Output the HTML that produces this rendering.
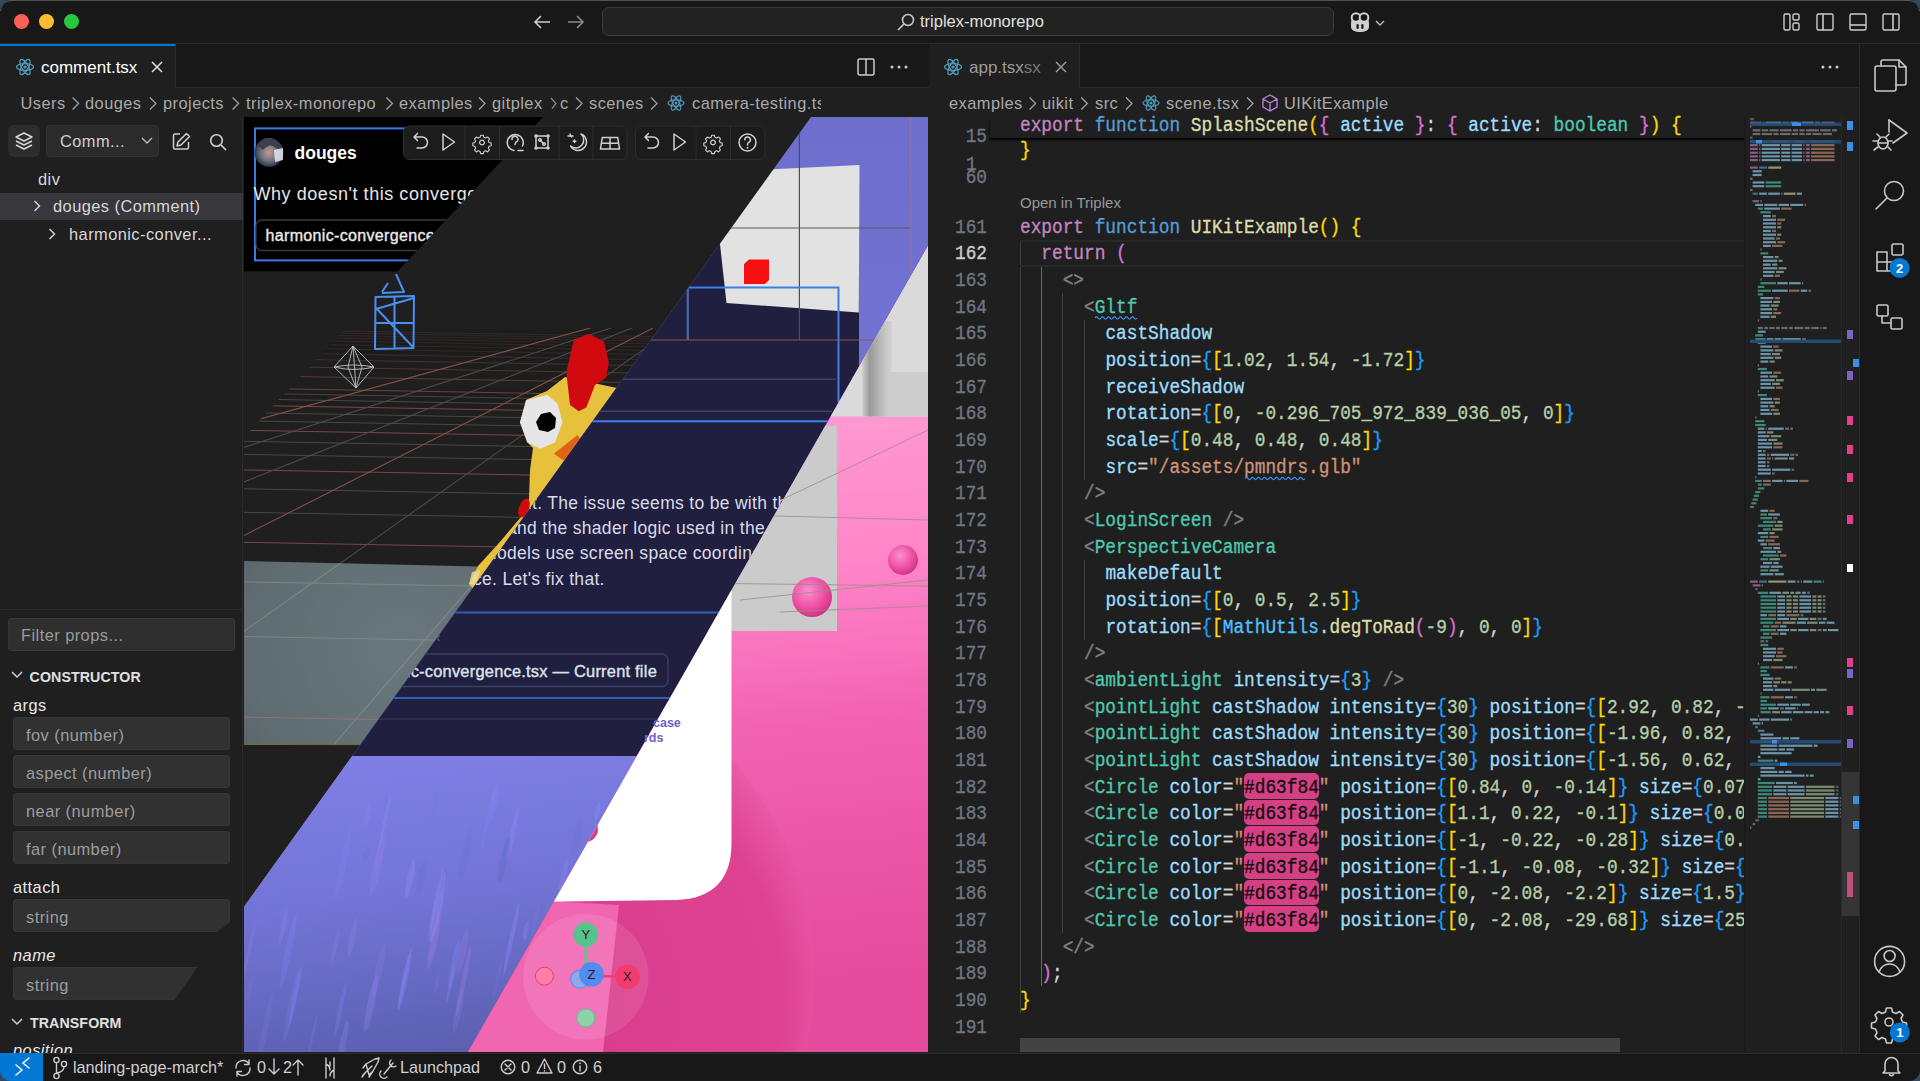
<!DOCTYPE html>
<html><head><meta charset="utf-8">
<style>
*{box-sizing:border-box;margin:0;padding:0}
html,body{width:1920px;height:1081px;overflow:hidden;background:#1f1f1f}
body{position:relative;font-family:"Liberation Sans",sans-serif;color:#ccc}
.a{position:absolute}
.t{position:absolute;white-space:nowrap;line-height:1}
svg{position:absolute;overflow:visible}
#title{left:0;top:0;width:1920px;height:44px;background:#181818;border-bottom:1px solid #2b2b2b}
#tabsL{left:0;top:44px;width:929px;height:44px;background:#181818;border-bottom:1px solid #2b2b2b}
#tabsR{left:929px;top:44px;width:930px;height:44px;background:#181818;border-bottom:1px solid #2b2b2b;border-left:1px solid #2b2b2b}
.tab{position:absolute;top:0;height:44px;background:#1f1f1f;border-right:1px solid #2b2b2b}
.bc{font-size:16.4px;letter-spacing:0.45px;color:#a9a9a9;top:95px}
.ui{font-size:16.4px;letter-spacing:0.45px}
#left{left:0;top:117px;width:243px;height:936px;background:#1f1f1f;border-right:1px solid #2b2b2b}
.inp{position:absolute;left:13px;width:217px;height:33px;background:#313131;border:1px solid #363636;border-radius:3px}
.inp span{position:absolute;left:12px;top:8px;font-size:16.4px;letter-spacing:0.45px;color:#9d9d9d;white-space:nowrap}
.lbl{font-size:16.5px;color:#e0e0e0}
#status{left:0;top:1053px;width:1920px;height:28px;background:#181818;border-top:1px solid #2b2b2b}
#act{left:1859px;top:44px;width:61px;height:1009px;background:#181818;border-left:1px solid #2b2b2b}
.code{position:absolute;left:1020px;font-family:"Liberation Mono",monospace;font-size:17.8px;white-space:pre;color:#d4d4d4;-webkit-text-stroke:0.3px currentColor;line-height:26.67px;height:26.67px;transform:translateY(1.6px) scaleY(1.17)}
.ln{position:absolute;left:930px;width:57px;text-align:right;font-family:"Liberation Mono",monospace;font-size:17.8px;color:#6e7681;-webkit-text-stroke:0.3px currentColor;line-height:26.67px;transform:translateY(1.6px) scaleY(1.17)}
.k{color:#c586c0}.f{color:#569cd6}.fn{color:#dcdcaa}.b1{color:#ffd700}.b2{color:#da70d6}.b3{color:#179fff}
.tg{color:#4ec9b0}.p{color:#808080}.at{color:#9cdcfe}.n{color:#b5cea8}.s{color:#ce9178}.w{color:#d4d4d4}
.hx{color:#111}.mu{color:#4fc1ff}
</style></head><body>

<!-- TITLE BAR -->
<div id="title" class="a"></div>
<div class="a" style="left:14px;top:14px;width:15px;height:15px;border-radius:50%;background:#fe5f57"></div>
<div class="a" style="left:39px;top:14px;width:15px;height:15px;border-radius:50%;background:#febc2e"></div>
<div class="a" style="left:64px;top:14px;width:15px;height:15px;border-radius:50%;background:#28c840"></div>

<!-- TABS -->
<div id="tabsL" class="a"></div>
<div class="tab" style="left:0;top:44px;width:176px;border-top:2px solid #0078d4"></div>
<div class="t" style="left:41px;top:59px;font-size:17px;color:#fff">comment.tsx</div>
<div id="tabsR" class="a"></div>
<div class="tab" style="left:929px;top:44px;width:151px"></div>
<div class="t" style="left:969px;top:59px;font-size:17px;color:#9d9d9d">app.tsx<span style="color:#777">sx</span></div>

<!-- LEFT PANEL -->
<div id="left" class="a"></div>
<div class="a" style="left:8px;top:125px;width:32px;height:32px;background:#2d2d2d;border-radius:6px"></div>
<svg style="left:14px;top:131px" width="20" height="20" viewBox="0 0 20 20"><g fill="none" stroke="#d8d8d8" stroke-width="1.4" stroke-linejoin="round"><path d="M10 2l8 4-8 4-8-4z"/><path d="M2 10l8 4 8-4"/><path d="M2 14l8 4 8-4"/></g></svg>
<div class="a" style="left:46px;top:125px;width:113px;height:32px;background:#2b2b2b;border:1px solid #333;border-radius:4px"></div>
<div class="t ui" style="left:60px;top:133px;color:#cfcfcf">Comm...</div>
<svg style="left:140px;top:136px" width="14" height="10" viewBox="0 0 14 10"><path d="M2 2l5 5 5-5" fill="none" stroke="#bbb" stroke-width="1.4"/></svg>
<svg style="left:171px;top:131px" width="21" height="21" viewBox="0 0 21 21"><g fill="none" stroke="#cfcfcf" stroke-width="1.5" stroke-linejoin="round"><path d="M9 3H4a1.5 1.5 0 0 0-1.5 1.5v12A1.5 1.5 0 0 0 4 18h12a1.5 1.5 0 0 0 1.5-1.5V11"/><path d="M15.5 2.5l3 3L10 14l-4 1 1-4z"/></g></svg>
<svg style="left:208px;top:132px" width="20" height="20" viewBox="0 0 20 20"><circle cx="8.5" cy="8.5" r="5.8" fill="none" stroke="#cfcfcf" stroke-width="1.6"/><path d="M13 13l5 5" stroke="#cfcfcf" stroke-width="1.7"/></svg>

<div class="t ui" style="left:38px;top:171px;color:#d8d8d8">div</div>
<div class="a" style="left:0;top:193px;width:243px;height:27px;background:#37373d"></div>
<svg style="left:32px;top:199px" width="10" height="14" viewBox="0 0 10 14"><path d="M2.5 2l5 5-5 5" fill="none" stroke="#cfcfcf" stroke-width="1.5"/></svg>
<div class="t ui" style="left:53px;top:198px;color:#d8d8d8">douges (Comment)</div>
<svg style="left:47px;top:227px" width="10" height="14" viewBox="0 0 10 14"><path d="M2.5 2l5 5-5 5" fill="none" stroke="#cfcfcf" stroke-width="1.5"/></svg>
<div class="t ui" style="left:69px;top:226px;color:#d8d8d8">harmonic-conver...</div>

<div class="a" style="left:0;top:609px;width:243px;height:1px;background:#2b2b2b"></div>
<div class="a" style="left:8px;top:618px;width:227px;height:33px;background:#2f2f2f;border:1px solid #383838;border-radius:3px"></div>
<div class="t ui" style="left:21px;top:627px;color:#9a9a9a">Filter props...</div>

<svg style="left:10px;top:670px" width="14" height="10" viewBox="0 0 14 10"><path d="M2 2l5 5 5-5" fill="none" stroke="#cfcfcf" stroke-width="1.5"/></svg>
<div class="t" style="left:29.6px;top:670px;font-size:14.2px;font-weight:bold;color:#e0e0e0;letter-spacing:0.1px">CONSTRUCTOR</div>
<div class="t ui" style="left:13px;top:697px;color:#e8e8e8">args</div>
<div class="inp" style="top:717px"><span>fov (number)</span></div>
<div class="inp" style="top:755px"><span>aspect (number)</span></div>
<div class="inp" style="top:793px"><span>near (number)</span></div>
<div class="inp" style="top:831px"><span>far (number)</span></div>
<div class="t ui" style="left:13px;top:879px;color:#e8e8e8">attach</div>
<div class="inp" style="top:899px;clip-path:polygon(0 0,100% 0,100% 70%,94% 100%,0 100%)"><span>string</span></div>
<div class="t ui" style="left:13px;top:947px;color:#e8e8e8;font-style:italic">name</div>
<div class="inp" style="top:967px;clip-path:polygon(0 0,85% 0,74.5% 100%,0 100%)"><span>string</span></div>
<svg style="left:10px;top:1017px" width="14" height="10" viewBox="0 0 14 10"><path d="M2 2l5 5 5-5" fill="none" stroke="#cfcfcf" stroke-width="1.5"/></svg>
<div class="t" style="left:30px;top:1016px;font-size:14.2px;font-weight:bold;color:#e0e0e0;letter-spacing:0.1px">TRANSFORM</div>
<div class="t ui" style="left:13px;top:1042px;color:#e8e8e8;font-style:italic">position</div>


<!-- STATUS BAR -->
<div id="status" class="a"></div>
<div class="a" style="left:0;top:1053px;width:43px;height:28px;background:#0078d4"></div>
<svg style="left:0;top:0" width="1920" height="1081" viewBox="0 0 1920 1081">
<g fill="none" stroke="#ffffff" stroke-width="1.5" stroke-linecap="round"><path d="M16 1065 L22 1070 L16 1075 M29 1058 L23 1063 L29 1068"/></g>
<g fill="none" stroke="#cccccc" stroke-width="1.4" stroke-linecap="round" stroke-linejoin="round">
 <!-- branch -->
 <circle cx="56.5" cy="1076" r="2.6"/><circle cx="56.5" cy="1060" r="2.6"/><circle cx="64" cy="1064" r="2.6"/>
 <path d="M56.5 1062.6 V1073.4 M64 1066.6 Q64 1072 57 1073"/>
 <!-- sync -->
 <path d="M236 1068 A7 7 0 0 1 249 1064 M250 1068 A7 7 0 0 1 237 1072 M249 1060 V1064.5 H244.5 M237 1076 V1071.5 H241.5"/>
 <path d="M274 1059 V1074 M269 1069 L274 1074 L279 1069 M298 1075 V1060 M293 1065 L298 1060 L303 1065"/>
 <!-- icon at 330 -->
 <path d="M326 1058 V1078 M334 1058 V1078 M326 1064 Q330 1066 330 1070 M334 1070 Q330 1072 330 1076 M330 1062 V1066"/>
 <!-- rocket -->
 <path d="M363 1075 L372 1066 M366 1064 L375 1059 L379 1058 L378 1062 L373 1071 L369 1075 Z M363 1068 L366 1064 M373 1071 L369 1077 M362 1077 L365 1073"/>
 <path d="M384 1074 L393 1063 M381 1071 A3 3 0 1 0 387 1077 M391 1060 A3 3 0 1 0 396 1066"/>
 <!-- error -->
 <circle cx="508" cy="1067" r="6.8"/><path d="M505 1064 L511 1070 M511 1064 L505 1070"/>
 <!-- warning -->
 <path d="M544.5 1059 L552 1073 H537 Z M544.5 1064 V1068.5"/>
 <!-- info -->
 <circle cx="580" cy="1067" r="6.8"/><path d="M580 1066 V1071"/>
</g>
<circle cx="580" cy="1063.3" r="0.9" fill="#ccc"/><circle cx="544.5" cy="1071" r="0.8" fill="#ccc"/>
<g font-family="Liberation Sans" font-size="16.2" fill="#d0d0d0">
 <text x="73" y="1073">landing-page-march*</text>
 <text x="257" y="1073">0</text>
 <text x="283" y="1073">2</text>
 <text x="400" y="1073">Launchpad</text>
 <text x="521" y="1073">0</text>
 <text x="557" y="1073">0</text>
 <text x="593" y="1073">6</text>
</g>
</svg>


<svg style="left:0;top:0" width="1920" height="1081" viewBox="0 0 1920 1081">
<defs>
<clipPath id="cvp"><rect x="244" y="117" width="684" height="935"/></clipPath>
<clipPath id="cA"><polygon points="244,117 543,117 397.6,271.3 244,271.3"/></clipPath>
<clipPath id="cB"><polygon points="244,117 811,117 244,906.7"/></clipPath>
<clipPath id="cC"><polygon points="811,117 928,117 928,245.5 468.0,1052 244,1052 244,906.7"/></clipPath>
<clipPath id="cD"><polygon points="928.2,245.5 928,1052 468.0,1052"/></clipPath>
<linearGradient id="gPurp" x1="0" y1="0" x2="0.3" y2="1"><stop offset="0" stop-color="#8080e6"/><stop offset="0.5" stop-color="#7374d6"/><stop offset="1" stop-color="#5b60b0"/></linearGradient>
<linearGradient id="gPurpT" x1="0" y1="0" x2="0" y2="1"><stop offset="0" stop-color="#6e6ecd"/><stop offset="1" stop-color="#7b7ee0"/></linearGradient>
<linearGradient id="gPlane" x1="0" y1="0" x2="1" y2="0.3"><stop offset="0" stop-color="#4e5658"/><stop offset="0.5" stop-color="#67737a"/><stop offset="1" stop-color="#6c787b"/></linearGradient>
<linearGradient id="gPink" gradientUnits="userSpaceOnUse" x1="0" y1="416" x2="60" y2="1052"><stop offset="0" stop-color="#ffa3d8"/><stop offset="0.35" stop-color="#ff86c8"/><stop offset="0.6" stop-color="#f262b2"/><stop offset="1" stop-color="#e44b9c"/></linearGradient><radialGradient id="gBig" gradientUnits="userSpaceOnUse" cx="520" cy="1000" r="330"><stop offset="0" stop-color="#d83a8b"/><stop offset="0.8" stop-color="#de4392"/><stop offset="0.97" stop-color="#ea5ca8"/><stop offset="1" stop-color="#ef6ab2"/></radialGradient>
<radialGradient id="gSph" cx="0.4" cy="0.35" r="0.7"><stop offset="0" stop-color="#ff8fd0"/><stop offset="0.7" stop-color="#e8479a"/><stop offset="1" stop-color="#c83080"/></radialGradient>
<linearGradient id="gGreyBox" x1="0" y1="0" x2="1" y2="0"><stop offset="0" stop-color="#d0d0d0"/><stop offset="0.25" stop-color="#9a9a9a"/><stop offset="0.8" stop-color="#c8c8c8"/><stop offset="1" stop-color="#d4d4d4"/></linearGradient>
<radialGradient id="gPlaneR" gradientUnits="userSpaceOnUse" cx="400" cy="650" r="260"><stop offset="0" stop-color="#6a787c"/><stop offset="0.6" stop-color="#606c70"/><stop offset="1" stop-color="#4c5456"/></radialGradient>
<clipPath id="cPlane"><polygon points="244,561 720,572 720,745 244,744"/></clipPath>
</defs>
<g clip-path="url(#cvp)">
<g clip-path="url(#cB)">
<rect x="244" y="117" width="684" height="935" fill="#1f1f1f"/>
<clipPath id="cGrid"><polygon points="346,328 928,328 928,745 244,745 244,437"/></clipPath>
<g clip-path="url(#cGrid)"><line x1="244" y1="329.3" x2="928" y2="341.6" stroke="#7a4844" stroke-width="1" opacity="0.25"/><line x1="244" y1="331.4" x2="928" y2="343.7" stroke="#7a4844" stroke-width="1" opacity="0.25"/><line x1="244" y1="333.8" x2="928" y2="346.1" stroke="#7a4844" stroke-width="1" opacity="0.25"/><line x1="244" y1="336.4" x2="928" y2="348.8" stroke="#7a4844" stroke-width="1" opacity="0.25"/><line x1="244" y1="339.5" x2="928" y2="351.8" stroke="#7a4844" stroke-width="1" opacity="0.25"/><line x1="244" y1="343.1" x2="928" y2="355.4" stroke="#7a4844" stroke-width="1" opacity="0.25"/><line x1="244" y1="347.3" x2="928" y2="359.6" stroke="#7a4844" stroke-width="1" opacity="0.28"/><line x1="244" y1="352.4" x2="928" y2="364.7" stroke="#7a4844" stroke-width="1" opacity="0.35"/><line x1="244" y1="358.4" x2="928" y2="370.8" stroke="#7a4844" stroke-width="1" opacity="0.43"/><line x1="244" y1="366.0" x2="928" y2="378.3" stroke="#7a4844" stroke-width="1" opacity="0.54"/><line x1="244" y1="375.6" x2="928" y2="387.9" stroke="#7a4844" stroke-width="1" opacity="0.68"/><line x1="244" y1="388.1" x2="928" y2="400.4" stroke="#7a4844" stroke-width="1" opacity="0.86"/><line x1="244" y1="393.2" x2="928" y2="405.5" stroke="#484848" stroke-width="1" opacity="0.93"/><line x1="244" y1="398.9" x2="928" y2="411.2" stroke="#484848" stroke-width="1" opacity="1.00"/><line x1="244" y1="405.3" x2="928" y2="417.6" stroke="#7a4844" stroke-width="1" opacity="1.00"/><line x1="244" y1="412.6" x2="928" y2="424.9" stroke="#484848" stroke-width="1" opacity="1.00"/><line x1="244" y1="420.8" x2="928" y2="433.1" stroke="#484848" stroke-width="1" opacity="1.00"/><line x1="244" y1="430.3" x2="928" y2="442.6" stroke="#7a4844" stroke-width="1" opacity="1.00"/><line x1="244" y1="441.3" x2="928" y2="453.7" stroke="#484848" stroke-width="1" opacity="1.00"/><line x1="244" y1="454.4" x2="928" y2="466.7" stroke="#484848" stroke-width="1" opacity="1.00"/><line x1="244" y1="469.9" x2="928" y2="482.2" stroke="#7a4844" stroke-width="1" opacity="1.00"/><line x1="244" y1="488.8" x2="928" y2="501.1" stroke="#484848" stroke-width="1" opacity="1.00"/><line x1="244" y1="512.3" x2="928" y2="524.7" stroke="#484848" stroke-width="1" opacity="1.00"/><line x1="244" y1="542.3" x2="928" y2="554.7" stroke="#7a4844" stroke-width="1" opacity="1.00"/><line x1="244" y1="581.9" x2="928" y2="594.3" stroke="#484848" stroke-width="1" opacity="1.00"/><line x1="244" y1="636.6" x2="928" y2="649.0" stroke="#484848" stroke-width="1" opacity="1.00"/><line x1="244" y1="717.1" x2="928" y2="729.4" stroke="#7a4844" stroke-width="1" opacity="1.00"/><line x1="590.2" y1="328" x2="-922.3" y2="745" stroke="#84504a" stroke-width="1.1"/><line x1="611.1" y1="328" x2="-671.1" y2="745" stroke="#4a4a4a" stroke-width="1.1"/><line x1="632.1" y1="328" x2="-420.0" y2="745" stroke="#4a4a4a" stroke-width="1.1"/><line x1="653.1" y1="328" x2="-168.8" y2="745" stroke="#84504a" stroke-width="1.1"/><line x1="674.1" y1="328" x2="82.4" y2="745" stroke="#4a4a4a" stroke-width="1.1"/><line x1="695.1" y1="328" x2="333.5" y2="745" stroke="#4a4a4a" stroke-width="1.1"/><line x1="716.0" y1="328" x2="584.7" y2="745" stroke="#84504a" stroke-width="1.1"/><line x1="737.0" y1="328" x2="835.8" y2="745" stroke="#4a4a4a" stroke-width="1.1"/><line x1="758.0" y1="328" x2="1087.0" y2="745" stroke="#4a4a4a" stroke-width="1.1"/><line x1="779.0" y1="328" x2="1338.2" y2="745" stroke="#84504a" stroke-width="1.1"/><line x1="799.9" y1="328" x2="1589.3" y2="745" stroke="#4a4a4a" stroke-width="1.1"/><line x1="820.9" y1="328" x2="1840.5" y2="745" stroke="#4a4a4a" stroke-width="1.1"/><line x1="841.9" y1="328" x2="2091.6" y2="745" stroke="#84504a" stroke-width="1.1"/><line x1="862.9" y1="328" x2="2342.8" y2="745" stroke="#4a4a4a" stroke-width="1.1"/><line x1="883.8" y1="328" x2="2594.0" y2="745" stroke="#4a4a4a" stroke-width="1.1"/></g>
<polygon points="244,561 720,572 720,745 244,744" fill="url(#gPlaneR)"/>
<line x1="244" y1="744.5" x2="720" y2="745" stroke="#9a8c50" stroke-width="1" opacity="0.7"/>
<g clip-path="url(#cGrid)" opacity="0.45"><g clip-path="url(#cPlane)"><line x1="244" y1="329.3" x2="928" y2="341.6" stroke="#c07a70" stroke-width="1" opacity="0.25"/><line x1="244" y1="331.4" x2="928" y2="343.7" stroke="#c07a70" stroke-width="1" opacity="0.25"/><line x1="244" y1="333.8" x2="928" y2="346.1" stroke="#c07a70" stroke-width="1" opacity="0.25"/><line x1="244" y1="336.4" x2="928" y2="348.8" stroke="#c07a70" stroke-width="1" opacity="0.25"/><line x1="244" y1="339.5" x2="928" y2="351.8" stroke="#c07a70" stroke-width="1" opacity="0.25"/><line x1="244" y1="343.1" x2="928" y2="355.4" stroke="#c07a70" stroke-width="1" opacity="0.25"/><line x1="244" y1="347.3" x2="928" y2="359.6" stroke="#c07a70" stroke-width="1" opacity="0.28"/><line x1="244" y1="352.4" x2="928" y2="364.7" stroke="#c07a70" stroke-width="1" opacity="0.35"/><line x1="244" y1="358.4" x2="928" y2="370.8" stroke="#c07a70" stroke-width="1" opacity="0.43"/><line x1="244" y1="366.0" x2="928" y2="378.3" stroke="#c07a70" stroke-width="1" opacity="0.54"/><line x1="244" y1="375.6" x2="928" y2="387.9" stroke="#c07a70" stroke-width="1" opacity="0.68"/><line x1="244" y1="388.1" x2="928" y2="400.4" stroke="#c07a70" stroke-width="1" opacity="0.86"/><line x1="244" y1="393.2" x2="928" y2="405.5" stroke="#9aa2a4" stroke-width="1" opacity="0.93"/><line x1="244" y1="398.9" x2="928" y2="411.2" stroke="#9aa2a4" stroke-width="1" opacity="1.00"/><line x1="244" y1="405.3" x2="928" y2="417.6" stroke="#c07a70" stroke-width="1" opacity="1.00"/><line x1="244" y1="412.6" x2="928" y2="424.9" stroke="#9aa2a4" stroke-width="1" opacity="1.00"/><line x1="244" y1="420.8" x2="928" y2="433.1" stroke="#9aa2a4" stroke-width="1" opacity="1.00"/><line x1="244" y1="430.3" x2="928" y2="442.6" stroke="#c07a70" stroke-width="1" opacity="1.00"/><line x1="244" y1="441.3" x2="928" y2="453.7" stroke="#9aa2a4" stroke-width="1" opacity="1.00"/><line x1="244" y1="454.4" x2="928" y2="466.7" stroke="#9aa2a4" stroke-width="1" opacity="1.00"/><line x1="244" y1="469.9" x2="928" y2="482.2" stroke="#c07a70" stroke-width="1" opacity="1.00"/><line x1="244" y1="488.8" x2="928" y2="501.1" stroke="#9aa2a4" stroke-width="1" opacity="1.00"/><line x1="244" y1="512.3" x2="928" y2="524.7" stroke="#9aa2a4" stroke-width="1" opacity="1.00"/><line x1="244" y1="542.3" x2="928" y2="554.7" stroke="#c07a70" stroke-width="1" opacity="1.00"/><line x1="244" y1="581.9" x2="928" y2="594.3" stroke="#9aa2a4" stroke-width="1" opacity="1.00"/><line x1="244" y1="636.6" x2="928" y2="649.0" stroke="#9aa2a4" stroke-width="1" opacity="1.00"/><line x1="244" y1="717.1" x2="928" y2="729.4" stroke="#c07a70" stroke-width="1" opacity="1.00"/><line x1="590.2" y1="328" x2="-922.3" y2="745" stroke="#c07a70" stroke-width="1.1"/><line x1="611.1" y1="328" x2="-671.1" y2="745" stroke="#9aa2a4" stroke-width="1.1"/><line x1="632.1" y1="328" x2="-420.0" y2="745" stroke="#9aa2a4" stroke-width="1.1"/><line x1="653.1" y1="328" x2="-168.8" y2="745" stroke="#c07a70" stroke-width="1.1"/><line x1="674.1" y1="328" x2="82.4" y2="745" stroke="#9aa2a4" stroke-width="1.1"/><line x1="695.1" y1="328" x2="333.5" y2="745" stroke="#9aa2a4" stroke-width="1.1"/><line x1="716.0" y1="328" x2="584.7" y2="745" stroke="#c07a70" stroke-width="1.1"/><line x1="737.0" y1="328" x2="835.8" y2="745" stroke="#9aa2a4" stroke-width="1.1"/><line x1="758.0" y1="328" x2="1087.0" y2="745" stroke="#9aa2a4" stroke-width="1.1"/><line x1="779.0" y1="328" x2="1338.2" y2="745" stroke="#c07a70" stroke-width="1.1"/><line x1="799.9" y1="328" x2="1589.3" y2="745" stroke="#9aa2a4" stroke-width="1.1"/><line x1="820.9" y1="328" x2="1840.5" y2="745" stroke="#9aa2a4" stroke-width="1.1"/><line x1="841.9" y1="328" x2="2091.6" y2="745" stroke="#c07a70" stroke-width="1.1"/><line x1="862.9" y1="328" x2="2342.8" y2="745" stroke="#9aa2a4" stroke-width="1.1"/><line x1="883.8" y1="328" x2="2594.0" y2="745" stroke="#9aa2a4" stroke-width="1.1"/></g></g>
<g fill="none" stroke="#4a8ff0" stroke-width="2" stroke-linejoin="round"><path d="M375.5 297 L414 296 L413.5 348 L375 349 Z M394.5 296.5 V349 M375.5 323 H414 M376 309 L414 298 M376 308 L413 347"/><path d="M382 292 L388 283 M396 274 L404 292 L382 293"/></g>
<g fill="none" stroke="#b8c4cc" stroke-width="1" opacity="0.9"><path d="M353 346 L374 367 L356 388 L334 367 Z M353 346 L356 388 M334 367 Q354 372 374 367 M334 367 Q354 363 374 367 M353 346 L348 367 L356 388 M353 346 L362 367 L356 388"/></g>
<g><polygon points="565,377 617,388 700,400 500,620 469,584 478,566 499,543 521,517 529,499 530,470 533,448 527,442 520,422 526,400 547,391" fill="#e8c13c"/><path d="M588.8 333.8 L603.8 341.3 L608.8 362.5 L606.3 377.5 L595 385 L586.3 407.5 L578.8 411.3 L570 405 L566.3 372.5 L573.8 340 Z" fill="#d10a10"/><path d="M526.3 400 L547.5 395 L557.5 403.8 L562.5 422.5 L555 442.5 L540 448.8 L527.5 442.5 L520 422.5 Z" fill="#e6e6e6"/><path d="M541 414 L550 412 L556 418 L555 428 L548 432 L539 430 L536 422 Z" fill="#000"/><path d="M553.8 453.8 L577.5 435 L582 441 L566 462 Z" fill="#e06414"/><ellipse cx="524" cy="508" rx="5" ry="10" transform="rotate(20 524 508)" fill="#d10a10"/><polygon points="469,584 472,572 480,570 476,585" fill="#e8dca0" opacity="0.8"/></g>
</g>
<g clip-path="url(#cC)">
<rect x="244" y="117" width="684" height="935" fill="url(#gPurpT)"/>
<rect x="244" y="169" width="615" height="587" fill="#201f40"/>
<rect x="244" y="756" width="684" height="296" fill="url(#gPurp)"/>
<g><ellipse cx="352.5" cy="937.1" rx="3.0" ry="19.8" fill="#a080e0" opacity="0.25" transform="rotate(12 352.5 937.1)"/><ellipse cx="520.2" cy="1029.0" rx="2.9" ry="23.0" fill="#8c8cff" opacity="0.35" transform="rotate(12 520.2 1029.0)"/><ellipse cx="458.4" cy="1010.8" rx="3.1" ry="23.2" fill="#8c8cff" opacity="0.17" transform="rotate(12 458.4 1010.8)"/><ellipse cx="313.1" cy="1033.3" rx="1.5" ry="20.5" fill="#8c8cff" opacity="0.16" transform="rotate(12 313.1 1033.3)"/><ellipse cx="680.6" cy="810.8" rx="3.6" ry="33.0" fill="#9a90ff" opacity="0.23" transform="rotate(12 680.6 810.8)"/><ellipse cx="571.8" cy="1021.5" rx="3.8" ry="30.9" fill="#5a6ac0" opacity="0.29" transform="rotate(12 571.8 1021.5)"/><ellipse cx="507.1" cy="1043.0" rx="2.4" ry="12.3" fill="#8c8cff" opacity="0.15" transform="rotate(12 507.1 1043.0)"/><ellipse cx="342.9" cy="1043.3" rx="3.1" ry="22.0" fill="#9a90ff" opacity="0.22" transform="rotate(12 342.9 1043.3)"/><ellipse cx="624.1" cy="944.7" rx="2.5" ry="25.1" fill="#8c8cff" opacity="0.33" transform="rotate(12 624.1 944.7)"/><ellipse cx="555.0" cy="1034.1" rx="4.0" ry="35.4" fill="#a080e0" opacity="0.28" transform="rotate(12 555.0 1034.1)"/><ellipse cx="562.6" cy="882.3" rx="2.9" ry="25.3" fill="#8c8cff" opacity="0.28" transform="rotate(12 562.6 882.3)"/><ellipse cx="340.3" cy="1009.6" rx="2.2" ry="26.4" fill="#8c8cff" opacity="0.23" transform="rotate(12 340.3 1009.6)"/><ellipse cx="535.3" cy="921.8" rx="1.7" ry="19.0" fill="#8c8cff" opacity="0.12" transform="rotate(12 535.3 921.8)"/><ellipse cx="438.8" cy="904.6" rx="3.0" ry="11.8" fill="#8c8cff" opacity="0.21" transform="rotate(12 438.8 904.6)"/><ellipse cx="511.4" cy="938.8" rx="2.2" ry="37.5" fill="#8c8cff" opacity="0.35" transform="rotate(12 511.4 938.8)"/><ellipse cx="385.2" cy="819.4" rx="1.6" ry="27.2" fill="#8c8cff" opacity="0.34" transform="rotate(12 385.2 819.4)"/><ellipse cx="377.0" cy="866.4" rx="3.9" ry="30.1" fill="#9a90ff" opacity="0.19" transform="rotate(12 377.0 866.4)"/><ellipse cx="681.1" cy="1026.0" rx="2.7" ry="20.1" fill="#6a80d0" opacity="0.21" transform="rotate(12 681.1 1026.0)"/><ellipse cx="639.3" cy="971.6" rx="3.9" ry="11.3" fill="#6a80d0" opacity="0.18" transform="rotate(12 639.3 971.6)"/><ellipse cx="533.2" cy="980.3" rx="2.6" ry="38.0" fill="#9a90ff" opacity="0.24" transform="rotate(12 533.2 980.3)"/><ellipse cx="494.1" cy="802.9" rx="2.9" ry="21.3" fill="#8c8cff" opacity="0.21" transform="rotate(12 494.1 802.9)"/><ellipse cx="512.7" cy="833.6" rx="2.3" ry="28.3" fill="#9a90ff" opacity="0.28" transform="rotate(12 512.7 833.6)"/><ellipse cx="404.8" cy="978.2" rx="1.6" ry="31.6" fill="#8c8cff" opacity="0.34" transform="rotate(12 404.8 978.2)"/><ellipse cx="253.7" cy="893.0" rx="2.2" ry="28.1" fill="#6a80d0" opacity="0.19" transform="rotate(12 253.7 893.0)"/><ellipse cx="410.0" cy="878.8" rx="3.0" ry="19.8" fill="#9a90ff" opacity="0.30" transform="rotate(12 410.0 878.8)"/><ellipse cx="291.8" cy="1004.9" rx="3.2" ry="39.1" fill="#8c8cff" opacity="0.19" transform="rotate(12 291.8 1004.9)"/><ellipse cx="345.5" cy="1002.6" rx="2.0" ry="15.6" fill="#5a6ac0" opacity="0.27" transform="rotate(12 345.5 1002.6)"/><ellipse cx="288.2" cy="951.4" rx="3.2" ry="38.4" fill="#8c8cff" opacity="0.22" transform="rotate(12 288.2 951.4)"/><ellipse cx="634.1" cy="842.7" rx="3.1" ry="18.8" fill="#6a80d0" opacity="0.22" transform="rotate(12 634.1 842.7)"/><ellipse cx="346.6" cy="830.5" rx="2.0" ry="24.9" fill="#6a80d0" opacity="0.16" transform="rotate(12 346.6 830.5)"/><ellipse cx="371.0" cy="1003.4" rx="3.5" ry="28.5" fill="#9a90ff" opacity="0.26" transform="rotate(12 371.0 1003.4)"/><ellipse cx="436.1" cy="930.6" rx="2.7" ry="35.2" fill="#a080e0" opacity="0.22" transform="rotate(12 436.1 930.6)"/><ellipse cx="435.4" cy="903.2" rx="1.9" ry="37.5" fill="#8c8cff" opacity="0.23" transform="rotate(12 435.4 903.2)"/><ellipse cx="623.6" cy="956.9" rx="2.9" ry="24.3" fill="#a080e0" opacity="0.17" transform="rotate(12 623.6 956.9)"/><ellipse cx="584.0" cy="1010.8" rx="2.8" ry="29.2" fill="#9a90ff" opacity="0.25" transform="rotate(12 584.0 1010.8)"/><ellipse cx="649.7" cy="1017.1" rx="3.9" ry="35.5" fill="#8c8cff" opacity="0.31" transform="rotate(12 649.7 1017.1)"/><ellipse cx="264.6" cy="1027.7" rx="3.8" ry="30.2" fill="#5a6ac0" opacity="0.25" transform="rotate(12 264.6 1027.7)"/><ellipse cx="250.0" cy="987.8" rx="2.2" ry="13.5" fill="#a080e0" opacity="0.12" transform="rotate(12 250.0 987.8)"/><ellipse cx="488.9" cy="813.4" rx="1.8" ry="37.2" fill="#8c8cff" opacity="0.18" transform="rotate(12 488.9 813.4)"/><ellipse cx="636.9" cy="920.3" rx="2.4" ry="33.0" fill="#8c8cff" opacity="0.15" transform="rotate(12 636.9 920.3)"/><ellipse cx="648.8" cy="830.0" rx="2.2" ry="15.7" fill="#8c8cff" opacity="0.31" transform="rotate(12 648.8 830.0)"/><ellipse cx="247.4" cy="958.4" rx="1.6" ry="35.6" fill="#9a90ff" opacity="0.18" transform="rotate(12 247.4 958.4)"/><ellipse cx="525.8" cy="931.0" rx="2.3" ry="9.6" fill="#8c8cff" opacity="0.32" transform="rotate(12 525.8 931.0)"/><ellipse cx="597.5" cy="811.6" rx="2.7" ry="9.6" fill="#8c8cff" opacity="0.32" transform="rotate(12 597.5 811.6)"/><ellipse cx="283.3" cy="926.5" rx="2.3" ry="18.1" fill="#9a90ff" opacity="0.21" transform="rotate(12 283.3 926.5)"/><ellipse cx="421.7" cy="876.6" rx="4.0" ry="16.5" fill="#5a6ac0" opacity="0.15" transform="rotate(12 421.7 876.6)"/><ellipse cx="497.3" cy="980.4" rx="1.7" ry="20.2" fill="#8c8cff" opacity="0.13" transform="rotate(12 497.3 980.4)"/><ellipse cx="454.1" cy="963.9" rx="3.1" ry="25.3" fill="#8c8cff" opacity="0.26" transform="rotate(12 454.1 963.9)"/><ellipse cx="440.8" cy="893.8" rx="3.3" ry="23.9" fill="#5a6ac0" opacity="0.34" transform="rotate(12 440.8 893.8)"/><ellipse cx="434.7" cy="804.5" rx="2.2" ry="15.0" fill="#6a80d0" opacity="0.14" transform="rotate(12 434.7 804.5)"/><ellipse cx="437.7" cy="907.3" rx="3.8" ry="36.1" fill="#9a90ff" opacity="0.34" transform="rotate(12 437.7 907.3)"/><ellipse cx="498.9" cy="1019.3" rx="3.2" ry="11.9" fill="#a080e0" opacity="0.27" transform="rotate(12 498.9 1019.3)"/><ellipse cx="648.6" cy="999.7" rx="3.3" ry="29.4" fill="#6a80d0" opacity="0.24" transform="rotate(12 648.6 999.7)"/><ellipse cx="614.1" cy="980.6" rx="2.1" ry="23.2" fill="#5a6ac0" opacity="0.13" transform="rotate(12 614.1 980.6)"/><ellipse cx="285.9" cy="825.0" rx="1.9" ry="36.2" fill="#8c8cff" opacity="0.20" transform="rotate(12 285.9 825.0)"/><ellipse cx="632.6" cy="806.4" rx="2.7" ry="11.7" fill="#a080e0" opacity="0.34" transform="rotate(12 632.6 806.4)"/><ellipse cx="508.1" cy="1001.3" rx="3.4" ry="9.2" fill="#6a80d0" opacity="0.24" transform="rotate(12 508.1 1001.3)"/><ellipse cx="352.7" cy="939.7" rx="2.9" ry="11.2" fill="#6a80d0" opacity="0.19" transform="rotate(12 352.7 939.7)"/><ellipse cx="501.2" cy="1008.7" rx="1.9" ry="15.7" fill="#8c8cff" opacity="0.22" transform="rotate(12 501.2 1008.7)"/><ellipse cx="563.3" cy="1037.5" rx="3.0" ry="16.1" fill="#9a90ff" opacity="0.25" transform="rotate(12 563.3 1037.5)"/><ellipse cx="684.6" cy="894.6" rx="3.8" ry="15.5" fill="#a080e0" opacity="0.34" transform="rotate(12 684.6 894.6)"/><ellipse cx="433.4" cy="943.2" rx="3.8" ry="26.6" fill="#a080e0" opacity="0.23" transform="rotate(12 433.4 943.2)"/><ellipse cx="537.2" cy="1026.1" rx="1.7" ry="12.8" fill="#a080e0" opacity="0.23" transform="rotate(12 537.2 1026.1)"/><ellipse cx="562.6" cy="1039.6" rx="3.6" ry="26.8" fill="#8c8cff" opacity="0.18" transform="rotate(12 562.6 1039.6)"/><ellipse cx="334.8" cy="947.6" rx="2.1" ry="18.1" fill="#a080e0" opacity="0.24" transform="rotate(12 334.8 947.6)"/><ellipse cx="599.5" cy="969.2" rx="3.0" ry="35.4" fill="#6a80d0" opacity="0.25" transform="rotate(12 599.5 969.2)"/><ellipse cx="365.8" cy="854.8" rx="2.7" ry="8.7" fill="#5a6ac0" opacity="0.17" transform="rotate(12 365.8 854.8)"/><ellipse cx="503.9" cy="860.2" rx="3.7" ry="23.4" fill="#5a6ac0" opacity="0.35" transform="rotate(12 503.9 860.2)"/><ellipse cx="462.7" cy="950.9" rx="3.6" ry="23.0" fill="#a080e0" opacity="0.25" transform="rotate(12 462.7 950.9)"/><ellipse cx="463.5" cy="981.6" rx="2.5" ry="35.4" fill="#a080e0" opacity="0.32" transform="rotate(12 463.5 981.6)"/><ellipse cx="264.9" cy="1029.5" rx="3.1" ry="36.5" fill="#a080e0" opacity="0.14" transform="rotate(12 264.9 1029.5)"/><ellipse cx="343.1" cy="864.1" rx="3.4" ry="36.5" fill="#8c8cff" opacity="0.16" transform="rotate(12 343.1 864.1)"/><ellipse cx="565.4" cy="1016.4" rx="2.1" ry="36.8" fill="#8c8cff" opacity="0.19" transform="rotate(12 565.4 1016.4)"/><ellipse cx="437.0" cy="983.7" rx="1.7" ry="10.7" fill="#9a90ff" opacity="0.13" transform="rotate(12 437.0 983.7)"/><ellipse cx="450.3" cy="985.0" rx="1.6" ry="18.8" fill="#9a90ff" opacity="0.22" transform="rotate(12 450.3 985.0)"/><ellipse cx="465.6" cy="852.9" rx="3.9" ry="26.7" fill="#5a6ac0" opacity="0.15" transform="rotate(12 465.6 852.9)"/><ellipse cx="389.4" cy="1022.6" rx="2.6" ry="10.4" fill="#5a6ac0" opacity="0.32" transform="rotate(12 389.4 1022.6)"/><ellipse cx="658.4" cy="824.4" rx="2.4" ry="38.1" fill="#9a90ff" opacity="0.29" transform="rotate(12 658.4 824.4)"/><ellipse cx="378.8" cy="970.3" rx="3.5" ry="28.9" fill="#9a90ff" opacity="0.14" transform="rotate(12 378.8 970.3)"/><ellipse cx="674.7" cy="885.3" rx="2.8" ry="26.1" fill="#a080e0" opacity="0.23" transform="rotate(12 674.7 885.3)"/><ellipse cx="404.6" cy="981.0" rx="2.9" ry="29.7" fill="#8c8cff" opacity="0.27" transform="rotate(12 404.6 981.0)"/><ellipse cx="577.0" cy="837.7" rx="3.8" ry="19.9" fill="#5a6ac0" opacity="0.15" transform="rotate(12 577.0 837.7)"/><ellipse cx="668.9" cy="835.6" rx="3.3" ry="18.6" fill="#6a80d0" opacity="0.22" transform="rotate(12 668.9 835.6)"/><ellipse cx="381.1" cy="847.1" rx="3.5" ry="23.4" fill="#a080e0" opacity="0.14" transform="rotate(12 381.1 847.1)"/><ellipse cx="570.4" cy="990.1" rx="3.3" ry="25.4" fill="#9a90ff" opacity="0.14" transform="rotate(12 570.4 990.1)"/><ellipse cx="367.5" cy="813.5" rx="2.7" ry="12.4" fill="#9a90ff" opacity="0.18" transform="rotate(12 367.5 813.5)"/><ellipse cx="594.6" cy="889.2" rx="2.5" ry="18.7" fill="#6a80d0" opacity="0.31" transform="rotate(12 594.6 889.2)"/><ellipse cx="275.6" cy="925.5" rx="1.9" ry="39.9" fill="#6a80d0" opacity="0.14" transform="rotate(12 275.6 925.5)"/><ellipse cx="295.4" cy="996.3" rx="2.0" ry="31.3" fill="#8c8cff" opacity="0.25" transform="rotate(12 295.4 996.3)"/><ellipse cx="549.6" cy="898.6" rx="1.8" ry="39.5" fill="#6a80d0" opacity="0.15" transform="rotate(12 549.6 898.6)"/></g>
<polygon points="712,172 859.5,165 858.8,312.5 726.5,303" fill="#e2e2e2"/>
<path d="M744 264 L749 259.5 L769 259.5 L769 280 L765 284 L744 284 Z" fill="#f50f10"/>
<line x1="799.4" y1="117" x2="799.4" y2="340" stroke="#4e4e52" stroke-width="1.2"/>
<line x1="710" y1="228" x2="911" y2="228" stroke="#5a5a5e" stroke-width="1.2"/>
<line x1="910.7" y1="117" x2="910.7" y2="280" stroke="#9a7a9a" stroke-width="1" opacity="0.7"/>
<path d="M687.7 340 V287.5 H838.5 V402" fill="none" stroke="#3d7fe8" stroke-width="2"/>
<path d="M687.7 288 V340" stroke="#8a5848" stroke-width="1.2"/>
<line x1="600" y1="340" x2="928" y2="340" stroke="#8a5848" stroke-width="1.2"/>
<line x1="560" y1="379.3" x2="836" y2="379.3" stroke="#3a4462" stroke-width="1.5"/>
<line x1="560" y1="411.3" x2="832" y2="411.3" stroke="#3a4462" stroke-width="1.5"/>
<line x1="500" y1="421.3" x2="840" y2="421.3" stroke="#3d7fe8" stroke-width="2"/>
<text x="424.2" y="509.0" font-family="Liberation Sans" font-size="17.5" fill="#d8dbe8" letter-spacing="0.31">I looked into it. The issue seems to be with the uniforms</text>
<text x="507.0" y="534.0" font-family="Liberation Sans" font-size="17.5" fill="#d8dbe8" letter-spacing="0.31">and the shader logic used in the vertex</text>
<text x="482.0" y="559.0" font-family="Liberation Sans" font-size="17.5" fill="#d8dbe8" letter-spacing="0.31">models use screen space coordinates</text>
<text x="473.0" y="584.5" font-family="Liberation Sans" font-size="17.5" fill="#d8dbe8" letter-spacing="0.31">ce. Let&#39;s fix that.</text>
<line x1="300" y1="612.4" x2="928" y2="612.4" stroke="#2f5fb8" stroke-width="2"/>
<rect x="300" y="654" width="368" height="32.5" rx="6" fill="none" stroke="#394263" stroke-width="1.3"/>
<text x="657" y="677" text-anchor="end" font-family="Liberation Sans" font-size="16.4" letter-spacing="0.24" fill="#dfe1ea" stroke="#dfe1ea" stroke-width="0.4">harmonic-convergence.tsx — Current file</text>
<line x1="300" y1="698" x2="928" y2="698" stroke="#2f5fb8" stroke-width="2"/>
<line x1="300" y1="719" x2="928" y2="719" stroke="#333a5a" stroke-width="1.2"/>
<text x="436" y="642" font-family="Liberation Sans" font-size="14" fill="#5a6488">‹</text>
</g>
<g clip-path="url(#cD)">
<rect x="244" y="117" width="684" height="935" fill="url(#gPink)"/>
<circle cx="485.6" cy="977" r="328.6" fill="url(#gBig)"/>
<polygon points="440,895 619,905 603,1052 440,1052" fill="#f066b0"/>
<rect x="790" y="240" width="138" height="176.5" fill="#dadada"/>
<rect x="862" y="321" width="30" height="95.5" fill="url(#gGreyBox)"/>
<rect x="888" y="372" width="40" height="44.5" fill="#cdcdcd"/>
<rect x="600" y="425.8" width="237" height="205.2" fill="#cbcbcb"/>
<path d="M300 590 H731.5 V843 Q731.5 898 676 900 L300 905 Z" fill="#ffffff"/>
<circle cx="812" cy="597" r="20" fill="url(#gSph)"/>
<circle cx="585" cy="829" r="13" fill="url(#gSph)"/>
<circle cx="903" cy="560" r="15" fill="url(#gSph)"/>
<g stroke="#9c8a8a" stroke-width="1" opacity="0.8"><line x1="760" y1="510" x2="928" y2="430"/><line x1="700" y1="514" x2="928" y2="520"/><line x1="690" y1="583" x2="928" y2="586"/><line x1="740" y1="600" x2="928" y2="580"/><line x1="780" y1="612" x2="928" y2="606"/></g>
</g>
</g>
</svg>
<svg style="left:0;top:0" width="1920" height="1081" viewBox="0 0 1920 1081">
<defs>
<clipPath id="cA2"><polygon points="244,117 543,117 397.6,271.3 244,271.3"/></clipPath>
<radialGradient id="gAv" cx="0.5" cy="0.5" r="0.5"><stop offset="0" stop-color="#c89a90"/><stop offset="0.6" stop-color="#6a7080"/><stop offset="1" stop-color="#2a3040"/></radialGradient>
</defs>
<g clip-path="url(#cA2)">
<rect x="244" y="117" width="300" height="155" fill="#000"/>
<rect x="255" y="128.4" width="400" height="132" fill="none" stroke="#3a7ce6" stroke-width="2"/>
<circle cx="269" cy="152.5" r="14.5" fill="url(#gAv)"/>
<path d="M258 146 Q262 136 272 138 Q280 141 281 150 L276 148 Q270 142 263 150 Z" fill="#3a4050"/>
<path d="M274 150 L283 148 L283 160 L275 162 Z" fill="#e8e8f0" opacity="0.85"/>
<text x="294.5" y="159" font-family="Liberation Sans" font-size="17.5" font-weight="bold" fill="#ffffff">douges</text>
<text x="253.5" y="199.5" font-family="Liberation Sans" font-size="18" fill="#e6e6e6" letter-spacing="0.55">Why doesn&#39;t this converge?</text>
<rect x="256" y="220" width="400" height="30.5" rx="6" fill="none" stroke="#3a3a3a" stroke-width="1.3"/>
<text x="265.5" y="241" font-family="Liberation Sans" font-size="16" fill="#ececec" letter-spacing="0.34" stroke="#ececec" stroke-width="0.35">harmonic-convergence.tsx</text>
</g>
<!-- toolbar -->
<g>
<rect x="403.5" y="126" width="223.5" height="33.5" rx="6" fill="#1c1c1c" stroke="#2e2e2e" stroke-width="1"/>
<rect x="635.5" y="126" width="129.5" height="33.5" rx="6" fill="#1c1c1c" stroke="#2e2e2e" stroke-width="1"/>
<g stroke="#2e2e2e" stroke-width="1"><line x1="465" y1="126" x2="465" y2="159.5"/><line x1="499.5" y1="126" x2="499.5" y2="159.5"/><line x1="559" y1="126" x2="559" y2="159.5"/><line x1="593" y1="126" x2="593" y2="159.5"/><line x1="696" y1="126" x2="696" y2="159.5"/><line x1="730.5" y1="126" x2="730.5" y2="159.5"/></g>
<g fill="none" stroke="#d0d0d0" stroke-width="1.5" stroke-linecap="round" stroke-linejoin="round">
 <!-- undo -->
 <path id="undo" d="M414 137 H422 A5.5 5.5 0 0 1 422 148 H417 M414 137 L417.5 133.5 M414 137 L417.5 140.5"/>
 <path d="M645 137 H653 A5.5 5.5 0 0 1 653 148 H648 M645 137 L648.5 133.5 M645 137 L648.5 140.5"/>
 <!-- play -->
 <path d="M443 134 L454.5 142 L443 150 Z"/>
 <path d="M674 134 L685.5 142 L674 150 Z"/>
 <!-- help speed -->
 <path d="M522.5 146 A8 8 0 1 0 514 150.5 M512 139.5 A3 3 0 1 1 516 142 L515 144.5"/>
 <path d="M518 150.5 H523"/>
 <!-- box select -->
 <rect x="536" y="136" width="12" height="12"/>
 <path d="M540.5 140.5 L543.5 143.5"/><circle cx="540" cy="140" r="1.3"/><circle cx="544" cy="144" r="1.3"/>
 <!-- moon -->
 <path d="M581 134 A8.5 8.5 0 1 1 570.5 146 A7 7 0 0 0 581 134 Z"/>
 <path d="M570 134 L571.5 137 M568 136 H573 M574.5 140 v2.5 M573.2 141.2 h2.6"/>
 <!-- floor -->
 <path d="M600.5 149 L602.3 137.4 H617.7 L619.5 149 Z M601.4 143.2 H618.6 M610 137.4 V149"/>
 <!-- help -->
 <circle cx="747.5" cy="142.5" r="8.5"/>
 <path d="M744.8 139.8 A2.8 2.8 0 1 1 748.5 142.5 Q747.5 143.3 747.5 145"/>
</g>
<g fill="#d0d0d0"><circle cx="536" cy="136" r="1.8"/><circle cx="548" cy="136" r="1.8"/><circle cx="536" cy="148" r="1.8"/><circle cx="548" cy="148" r="1.8"/><circle cx="747.5" cy="147.8" r="1"/></g>
<!-- gears -->
<g transform="translate(482 142.5) scale(0.85)"><path d="M-1.6 -8.5 h3.2 l0.6 2.4 l2.2 0.9 l2.1 -1.3 l2.3 2.3 l-1.3 2.1 l0.9 2.2 l2.4 0.6 v3.2 l-2.4 0.6 l-0.9 2.2 l1.3 2.1 l-2.3 2.3 l-2.1 -1.3 l-2.2 0.9 l-0.6 2.4 h-3.2 l-0.6 -2.4 l-2.2 -0.9 l-2.1 1.3 l-2.3 -2.3 l1.3 -2.1 l-0.9 -2.2 l-2.4 -0.6 v-3.2 l2.4 -0.6 l0.9 -2.2 l-1.3 -2.1 l2.3 -2.3 l2.1 1.3 l2.2 -0.9 z" fill="none" stroke="#d0d0d0" stroke-width="1.3" stroke-linejoin="round"/><circle r="2.8" fill="none" stroke="#d0d0d0" stroke-width="1.4"/></g>
<g transform="translate(713 142.5) scale(0.85)"><path d="M-1.6 -8.5 h3.2 l0.6 2.4 l2.2 0.9 l2.1 -1.3 l2.3 2.3 l-1.3 2.1 l0.9 2.2 l2.4 0.6 v3.2 l-2.4 0.6 l-0.9 2.2 l1.3 2.1 l-2.3 2.3 l-2.1 -1.3 l-2.2 0.9 l-0.6 2.4 h-3.2 l-0.6 -2.4 l-2.2 -0.9 l-2.1 1.3 l-2.3 -2.3 l1.3 -2.1 l-0.9 -2.2 l-2.4 -0.6 v-3.2 l2.4 -0.6 l0.9 -2.2 l-1.3 -2.1 l2.3 -2.3 l2.1 1.3 l2.2 -0.9 z" fill="none" stroke="#d0d0d0" stroke-width="1.3" stroke-linejoin="round"/><circle r="2.8" fill="none" stroke="#d0d0d0" stroke-width="1.4"/></g>
</g>
<!-- case / rds text -->
<text x="653" y="726.5" font-family="Liberation Sans" font-size="12.5" font-weight="bold" fill="#6d62c4">case</text>
<text x="644" y="741.5" font-family="Liberation Sans" font-size="12.5" font-weight="bold" fill="#6d62c4">rds</text>
<!-- gizmo -->
<g>
<circle cx="585.8" cy="976.7" r="62.7" fill="#ffffff" opacity="0.1"/>
<line x1="585.8" y1="935" x2="585.8" y2="976" stroke="#5cc48e" stroke-width="2.5"/>
<line x1="590" y1="976" x2="626" y2="976.7" stroke="#f0406e" stroke-width="2.5"/>
<circle cx="544.4" cy="976.2" r="9" fill="#ff7fa8" stroke="#e83c6c" stroke-width="1"/>
<circle cx="585.8" cy="1018" r="9" fill="#8ed3a8" stroke="#5cc48e" stroke-width="1"/>
<circle cx="579.7" cy="979.2" r="9" fill="#8ea8ee" stroke="#4a8cf0" stroke-width="1"/>
<circle cx="585.8" cy="934.6" r="12.3" fill="#56c38a"/>
<circle cx="627.4" cy="976.7" r="12.3" fill="#f23c6e"/>
<circle cx="591.5" cy="974.2" r="12.3" fill="#4a8cf0" opacity="0.95"/>
<g font-family="Liberation Sans" font-size="13" fill="#222" text-anchor="middle"><text x="585.8" y="939.3">Y</text><text x="627.4" y="981.4">X</text><text x="591.5" y="978.9">Z</text></g>
</g>
</svg>

<!-- EDITOR RIGHT -->
<div class="a" id="edR" style="left:929px;top:88px;width:816px;height:965px;overflow:hidden;background:#1f1f1f">
 <div class="a" style="left:0;top:0;width:816px;height:965px;transform:translate(-929px,-88px)">
  <!-- indent guides -->
  <div class="a" style="left:1020px;top:240px;width:1px;height:773px;background:#404040"></div>
  <div class="a" style="left:1041px;top:266px;width:1px;height:720px;background:#6a6a6a"></div>
  <div class="a" style="left:1062px;top:293px;width:1px;height:640px;background:#404040"></div>
  <div class="a" style="left:1084px;top:320px;width:1px;height:160px;background:#404040"></div>
  <div class="a" style="left:1084px;top:560px;width:1px;height:80px;background:#404040"></div>
  <!-- current line box -->
  <div class="a" style="left:1020px;top:240px;width:730px;height:27px;border-top:2px solid #282828;border-bottom:2px solid #282828"></div>
  <div class="t" style="left:1020px;top:195px;font-size:15px;color:#999">Open in Triplex</div>
  <div class="ln" style="top:212.67px">161</div>
<div class="code" style="top:212.67px"><span class="k">export</span> <span class="f">function</span> <span class="fn">UIKitExample</span><span class="b1">(</span><span class="b1">)</span> <span class="b1">{</span></div>
<div class="ln" style="top:239.33px;color:#cccccc">162</div>
<div class="code" style="top:239.33px">  <span class="k">return</span> <span class="b2">(</span></div>
<div class="ln" style="top:266.00px">163</div>
<div class="code" style="top:266.00px">    <span class="p">&lt;</span><span class="p">&gt;</span></div>
<div class="ln" style="top:292.67px">164</div>
<div class="code" style="top:292.67px">      <span class="p">&lt;</span><span class="tg">Gltf</span></div>
<div class="ln" style="top:319.33px">165</div>
<div class="code" style="top:319.33px">        <span class="at">castShadow</span></div>
<div class="ln" style="top:346.00px">166</div>
<div class="code" style="top:346.00px">        <span class="at">position</span><span class="w">=</span><span class="b3">{</span><span class="b1">[</span><span class="n">1.02</span><span class="w">,</span> <span class="n">1.54</span><span class="w">,</span> <span class="n">-1.72</span><span class="b1">]</span><span class="b3">}</span></div>
<div class="ln" style="top:372.67px">167</div>
<div class="code" style="top:372.67px">        <span class="at">receiveShadow</span></div>
<div class="ln" style="top:399.34px">168</div>
<div class="code" style="top:399.34px">        <span class="at">rotation</span><span class="w">=</span><span class="b3">{</span><span class="b1">[</span><span class="n">0</span><span class="w">,</span> <span class="n">-0.296_705_972_839_036_05</span><span class="w">,</span> <span class="n">0</span><span class="b1">]</span><span class="b3">}</span></div>
<div class="ln" style="top:426.00px">169</div>
<div class="code" style="top:426.00px">        <span class="at">scale</span><span class="w">=</span><span class="b3">{</span><span class="b1">[</span><span class="n">0.48</span><span class="w">,</span> <span class="n">0.48</span><span class="w">,</span> <span class="n">0.48</span><span class="b1">]</span><span class="b3">}</span></div>
<div class="ln" style="top:452.67px">170</div>
<div class="code" style="top:452.67px">        <span class="at">src</span><span class="w">=</span><span class="s">&quot;/assets/pmndrs.glb&quot;</span></div>
<div class="ln" style="top:479.34px">171</div>
<div class="code" style="top:479.34px">      <span class="p">/&gt;</span></div>
<div class="ln" style="top:506.00px">172</div>
<div class="code" style="top:506.00px">      <span class="p">&lt;</span><span class="tg">LoginScreen</span> <span class="p">/&gt;</span></div>
<div class="ln" style="top:532.67px">173</div>
<div class="code" style="top:532.67px">      <span class="p">&lt;</span><span class="tg">PerspectiveCamera</span></div>
<div class="ln" style="top:559.34px">174</div>
<div class="code" style="top:559.34px">        <span class="at">makeDefault</span></div>
<div class="ln" style="top:586.00px">175</div>
<div class="code" style="top:586.00px">        <span class="at">position</span><span class="w">=</span><span class="b3">{</span><span class="b1">[</span><span class="n">0</span><span class="w">,</span> <span class="n">0.5</span><span class="w">,</span> <span class="n">2.5</span><span class="b1">]</span><span class="b3">}</span></div>
<div class="ln" style="top:612.67px">176</div>
<div class="code" style="top:612.67px">        <span class="at">rotation</span><span class="w">=</span><span class="b3">{</span><span class="b1">[</span><span class="mu">MathUtils</span><span class="w">.</span><span class="fn">degToRad</span><span class="b2">(</span><span class="n">-9</span><span class="b2">)</span><span class="w">,</span> <span class="n">0</span><span class="w">,</span> <span class="n">0</span><span class="b1">]</span><span class="b3">}</span></div>
<div class="ln" style="top:639.34px">177</div>
<div class="code" style="top:639.34px">      <span class="p">/&gt;</span></div>
<div class="ln" style="top:666.01px">178</div>
<div class="code" style="top:666.01px">      <span class="p">&lt;</span><span class="tg">ambientLight</span> <span class="at">intensity</span><span class="w">=</span><span class="b3">{</span><span class="n">3</span><span class="b3">}</span> <span class="p">/&gt;</span></div>
<div class="ln" style="top:692.67px">179</div>
<div class="code" style="top:692.67px">      <span class="p">&lt;</span><span class="tg">pointLight</span> <span class="at">castShadow</span> <span class="at">intensity</span><span class="w">=</span><span class="b3">{</span><span class="n">30</span><span class="b3">}</span> <span class="at">position</span><span class="w">=</span><span class="b3">{</span><span class="b1">[</span><span class="n">2.92</span><span class="w">,</span> <span class="n">0.82</span><span class="w">,</span> <span class="n">-1.2</span><span class="b1">]</span><span class="b3">}</span> <span class="p">/&gt;</span></div>
<div class="ln" style="top:719.34px">180</div>
<div class="code" style="top:719.34px">      <span class="p">&lt;</span><span class="tg">pointLight</span> <span class="at">castShadow</span> <span class="at">intensity</span><span class="w">=</span><span class="b3">{</span><span class="n">30</span><span class="b3">}</span> <span class="at">position</span><span class="w">=</span><span class="b3">{</span><span class="b1">[</span><span class="n">-1.96</span><span class="w">,</span> <span class="n">0.82</span><span class="w">,</span> <span class="n">-1.2</span><span class="b1">]</span><span class="b3">}</span> <span class="p">/&gt;</span></div>
<div class="ln" style="top:746.01px">181</div>
<div class="code" style="top:746.01px">      <span class="p">&lt;</span><span class="tg">pointLight</span> <span class="at">castShadow</span> <span class="at">intensity</span><span class="w">=</span><span class="b3">{</span><span class="n">30</span><span class="b3">}</span> <span class="at">position</span><span class="w">=</span><span class="b3">{</span><span class="b1">[</span><span class="n">-1.56</span><span class="w">,</span> <span class="n">0.62</span><span class="w">,</span> <span class="n">-1.2</span><span class="b1">]</span><span class="b3">}</span> <span class="p">/&gt;</span></div>
<div class="ln" style="top:772.67px">182</div>
<div class="a" style="left:1244.3px;top:772.97px;width:75px;height:25.7px;background:#d63f84;border-radius:5px"></div>
<div class="code" style="top:772.67px">      <span class="p">&lt;</span><span class="tg">Circle</span> <span class="at">color</span><span class="w">=</span><span class="s">"</span><span class="hx">#d63f84</span><span class="s">"</span> <span class="at">position</span><span class="w">=</span><span class="b3">{</span><span class="b1">[</span><span class="n">0.84</span><span class="w">,</span> <span class="n">0</span><span class="w">,</span> <span class="n">-0.14</span><span class="b1">]</span><span class="b3">}</span> <span class="at">size</span><span class="w">=</span><span class="b3">{</span><span class="n">0.07</span><span class="b3">}</span> <span class="p">/&gt;</span></div>
<div class="ln" style="top:799.34px">183</div>
<div class="a" style="left:1244.3px;top:799.64px;width:75px;height:25.7px;background:#d63f84;border-radius:5px"></div>
<div class="code" style="top:799.34px">      <span class="p">&lt;</span><span class="tg">Circle</span> <span class="at">color</span><span class="w">=</span><span class="s">"</span><span class="hx">#d63f84</span><span class="s">"</span> <span class="at">position</span><span class="w">=</span><span class="b3">{</span><span class="b1">[</span><span class="n">1.1</span><span class="w">,</span> <span class="n">0.22</span><span class="w">,</span> <span class="n">-0.1</span><span class="b1">]</span><span class="b3">}</span> <span class="at">size</span><span class="w">=</span><span class="b3">{</span><span class="n">0.06</span><span class="b3">}</span> <span class="p">/&gt;</span></div>
<div class="ln" style="top:826.01px">184</div>
<div class="a" style="left:1244.3px;top:826.31px;width:75px;height:25.7px;background:#d63f84;border-radius:5px"></div>
<div class="code" style="top:826.01px">      <span class="p">&lt;</span><span class="tg">Circle</span> <span class="at">color</span><span class="w">=</span><span class="s">"</span><span class="hx">#d63f84</span><span class="s">"</span> <span class="at">position</span><span class="w">=</span><span class="b3">{</span><span class="b1">[</span><span class="n">-1</span><span class="w">,</span> <span class="n">-0.22</span><span class="w">,</span> <span class="n">-0.28</span><span class="b1">]</span><span class="b3">}</span> <span class="at">size</span><span class="w">=</span><span class="b3">{</span><span class="n">0.05</span><span class="b3">}</span> <span class="p">/&gt;</span></div>
<div class="ln" style="top:852.68px">185</div>
<div class="a" style="left:1244.3px;top:852.98px;width:75px;height:25.7px;background:#d63f84;border-radius:5px"></div>
<div class="code" style="top:852.68px">      <span class="p">&lt;</span><span class="tg">Circle</span> <span class="at">color</span><span class="w">=</span><span class="s">"</span><span class="hx">#d63f84</span><span class="s">"</span> <span class="at">position</span><span class="w">=</span><span class="b3">{</span><span class="b1">[</span><span class="n">-1.1</span><span class="w">,</span> <span class="n">-0.08</span><span class="w">,</span> <span class="n">-0.32</span><span class="b1">]</span><span class="b3">}</span> <span class="at">size</span><span class="w">=</span><span class="b3">{</span><span class="n">0.05</span><span class="b3">}</span> <span class="p">/&gt;</span></div>
<div class="ln" style="top:879.34px">186</div>
<div class="a" style="left:1244.3px;top:879.64px;width:75px;height:25.7px;background:#d63f84;border-radius:5px"></div>
<div class="code" style="top:879.34px">      <span class="p">&lt;</span><span class="tg">Circle</span> <span class="at">color</span><span class="w">=</span><span class="s">"</span><span class="hx">#d63f84</span><span class="s">"</span> <span class="at">position</span><span class="w">=</span><span class="b3">{</span><span class="b1">[</span><span class="n">0</span><span class="w">,</span> <span class="n">-2.08</span><span class="w">,</span> <span class="n">-2.2</span><span class="b1">]</span><span class="b3">}</span> <span class="at">size</span><span class="w">=</span><span class="b3">{</span><span class="n">1.5</span><span class="b3">}</span> <span class="p">/&gt;</span></div>
<div class="ln" style="top:906.01px">187</div>
<div class="a" style="left:1244.3px;top:906.31px;width:75px;height:25.7px;background:#d63f84;border-radius:5px"></div>
<div class="code" style="top:906.01px">      <span class="p">&lt;</span><span class="tg">Circle</span> <span class="at">color</span><span class="w">=</span><span class="s">"</span><span class="hx">#d63f84</span><span class="s">"</span> <span class="at">position</span><span class="w">=</span><span class="b3">{</span><span class="b1">[</span><span class="n">0</span><span class="w">,</span> <span class="n">-2.08</span><span class="w">,</span> <span class="n">-29.68</span><span class="b1">]</span><span class="b3">}</span> <span class="at">size</span><span class="w">=</span><span class="b3">{</span><span class="n">25</span><span class="b3">}</span> <span class="p">/&gt;</span></div>
<div class="ln" style="top:932.68px">188</div>
<div class="code" style="top:932.68px">    <span class="p">&lt;/</span><span class="p">&gt;</span></div>
<div class="ln" style="top:959.34px">189</div>
<div class="code" style="top:959.34px">  <span class="b2">)</span><span class="w">;</span></div>
<div class="ln" style="top:986.01px">190</div>
<div class="code" style="top:986.01px"><span class="b1">}</span></div>
<div class="ln" style="top:1012.68px">191</div>
<div class="code" style="top:1012.68px"></div>
  <svg style="left:0;top:0" width="1920" height="1081" viewBox="0 0 1920 1081"><path d="M1095.0 318.0 q1.5 -2.2 3 0 q1.5 2.2 3 0 q1.5 -2.2 3 0 q1.5 2.2 3 0 q1.5 -2.2 3 0 q1.5 2.2 3 0 q1.5 -2.2 3 0 q1.5 2.2 3 0 q1.5 -2.2 3 0 q1.5 2.2 3 0 q1.5 -2.2 3 0 q1.5 2.2 3 0 q1.5 -2.2 3 0 q1.5 2.2 3 0" fill="none" stroke="#3b8eea" stroke-width="1.3"/><path d="M1245.0 478.5 q1.5 -2.2 3 0 q1.5 2.2 3 0 q1.5 -2.2 3 0 q1.5 2.2 3 0 q1.5 -2.2 3 0 q1.5 2.2 3 0 q1.5 -2.2 3 0 q1.5 2.2 3 0 q1.5 -2.2 3 0 q1.5 2.2 3 0 q1.5 -2.2 3 0 q1.5 2.2 3 0 q1.5 -2.2 3 0 q1.5 2.2 3 0 q1.5 -2.2 3 0 q1.5 2.2 3 0 q1.5 -2.2 3 0 q1.5 2.2 3 0 q1.5 -2.2 3 0 q1.5 2.2 3 0" fill="none" stroke="#3b8eea" stroke-width="1.3"/></svg>
  <!-- sticky -->
  <div class="a" style="left:990px;top:117px;width:760px;height:21px;background:#1f1f1f;box-shadow:0 2px 2px #000"></div>
  <div class="code" style="top:111px"><span class="k">export</span> <span class="f">function</span> <span class="fn">SplashScene</span><span class="b1">(</span><span class="b2">{</span> <span class="at">active</span> <span class="b2">}</span><span class="w">:</span> <span class="b2">{</span> <span class="at">active</span><span class="w">:</span> <span class="tg">boolean</span> <span class="b2">}</span><span class="b1">)</span> <span class="b1">{</span></div>
  <div class="ln" style="top:122px">15</div>
  <div class="code" style="top:136px"><span class="b1">}</span></div>
  <div class="ln" style="top:150px;text-align:left;left:966px">1</div>
  <div class="ln" style="top:163px">60</div>
  <!-- h scrollbar -->
  <div class="a" style="left:1020px;top:1038px;width:600px;height:14px;background:#434343"></div>
 </div>
</div>

<svg style="left:0;top:0" width="1920" height="1081" viewBox="0 0 1920 1081"><g opacity="0.62">
<rect x="1750.0" y="118.0" width="3.9" height="2.2" fill="#808080"/>
<rect x="1750.0" y="121.7" width="11.7" height="2.2" fill="#c586c0"/>
<rect x="1763.0" y="121.7" width="1.3" height="2.2" fill="#999999"/>
<rect x="1765.6" y="121.7" width="15.6" height="2.2" fill="#9cdcfe"/>
<rect x="1782.5" y="121.7" width="6.5" height="2.2" fill="#999999"/>
<rect x="1790.3" y="121.7" width="7.8" height="2.2" fill="#9cdcfe"/>
<rect x="1799.4" y="121.7" width="1.3" height="2.2" fill="#999999"/>
<rect x="1802.0" y="121.7" width="11.7" height="2.2" fill="#9cdcfe"/>
<rect x="1815.0" y="121.7" width="5.2" height="2.2" fill="#999999"/>
<rect x="1821.5" y="121.7" width="13.0" height="2.2" fill="#ce9178"/>
<rect x="1750.0" y="125.5" width="1.3" height="2.2" fill="#999999"/>
<rect x="1752.6" y="129.2" width="7.8" height="2.2" fill="#999999"/>
<rect x="1761.7" y="129.2" width="6.5" height="2.2" fill="#999999"/>
<rect x="1769.5" y="129.2" width="9.1" height="2.2" fill="#999999"/>
<rect x="1779.9" y="129.2" width="11.7" height="2.2" fill="#999999"/>
<rect x="1792.9" y="129.2" width="5.2" height="2.2" fill="#999999"/>
<rect x="1799.4" y="129.2" width="5.2" height="2.2" fill="#999999"/>
<rect x="1805.9" y="129.2" width="13.0" height="2.2" fill="#999999"/>
<rect x="1820.2" y="129.2" width="10.4" height="2.2" fill="#999999"/>
<rect x="1831.9" y="129.2" width="5.2" height="2.2" fill="#999999"/>
<rect x="1752.6" y="132.9" width="7.8" height="2.2" fill="#999999"/>
<rect x="1761.7" y="132.9" width="10.4" height="2.2" fill="#999999"/>
<rect x="1773.4" y="132.9" width="5.2" height="2.2" fill="#999999"/>
<rect x="1779.9" y="132.9" width="10.4" height="2.2" fill="#999999"/>
<rect x="1791.6" y="132.9" width="6.5" height="2.2" fill="#999999"/>
<rect x="1799.4" y="132.9" width="5.2" height="2.2" fill="#999999"/>
<rect x="1805.9" y="132.9" width="5.2" height="2.2" fill="#999999"/>
<rect x="1812.4" y="132.9" width="9.1" height="2.2" fill="#999999"/>
<rect x="1822.8" y="132.9" width="9.1" height="2.2" fill="#999999"/>
<rect x="1750.0" y="136.6" width="2.6" height="2.2" fill="#808080"/>
<rect x="1750.0" y="140.4" width="7.8" height="2.2" fill="#c586c0"/>
<rect x="1759.1" y="140.4" width="10.4" height="2.2" fill="#569cd6"/>
<rect x="1770.8" y="140.4" width="18.2" height="2.2" fill="#dcdcaa"/>
<rect x="1790.3" y="140.4" width="2.6" height="2.2" fill="#999999"/>
<rect x="1794.2" y="140.4" width="10.4" height="2.2" fill="#9cdcfe"/>
<rect x="1805.9" y="140.4" width="2.6" height="2.2" fill="#999999"/>
<rect x="1809.8" y="140.4" width="7.8" height="2.2" fill="#9cdcfe"/>
<rect x="1818.9" y="140.4" width="15.6" height="2.2" fill="#4ec9b0"/>
<rect x="1750.0" y="144.1" width="7.8" height="2.2" fill="#c586c0"/>
<rect x="1759.1" y="144.1" width="1.3" height="2.2" fill="#999999"/>
<rect x="1761.7" y="144.1" width="18.2" height="2.2" fill="#9cdcfe"/>
<rect x="1781.2" y="144.1" width="9.1" height="2.2" fill="#9cdcfe"/>
<rect x="1791.6" y="144.1" width="10.4" height="2.2" fill="#9cdcfe"/>
<rect x="1803.3" y="144.1" width="1.3" height="2.2" fill="#999999"/>
<rect x="1805.9" y="144.1" width="3.9" height="2.2" fill="#c586c0"/>
<rect x="1811.1" y="144.1" width="23.4" height="2.2" fill="#ce9178"/>
<rect x="1750.0" y="147.8" width="7.8" height="2.2" fill="#c586c0"/>
<rect x="1759.1" y="147.8" width="1.3" height="2.2" fill="#999999"/>
<rect x="1761.7" y="147.8" width="18.2" height="2.2" fill="#9cdcfe"/>
<rect x="1781.2" y="147.8" width="9.1" height="2.2" fill="#9cdcfe"/>
<rect x="1791.6" y="147.8" width="10.4" height="2.2" fill="#9cdcfe"/>
<rect x="1803.3" y="147.8" width="1.3" height="2.2" fill="#999999"/>
<rect x="1805.9" y="147.8" width="3.9" height="2.2" fill="#c586c0"/>
<rect x="1811.1" y="147.8" width="23.4" height="2.2" fill="#ce9178"/>
<rect x="1750.0" y="151.6" width="7.8" height="2.2" fill="#c586c0"/>
<rect x="1759.1" y="151.6" width="1.3" height="2.2" fill="#999999"/>
<rect x="1761.7" y="151.6" width="18.2" height="2.2" fill="#9cdcfe"/>
<rect x="1781.2" y="151.6" width="9.1" height="2.2" fill="#9cdcfe"/>
<rect x="1791.6" y="151.6" width="10.4" height="2.2" fill="#9cdcfe"/>
<rect x="1803.3" y="151.6" width="1.3" height="2.2" fill="#999999"/>
<rect x="1805.9" y="151.6" width="3.9" height="2.2" fill="#c586c0"/>
<rect x="1811.1" y="151.6" width="23.4" height="2.2" fill="#ce9178"/>
<rect x="1750.0" y="155.3" width="7.8" height="2.2" fill="#c586c0"/>
<rect x="1759.1" y="155.3" width="1.3" height="2.2" fill="#999999"/>
<rect x="1761.7" y="155.3" width="18.2" height="2.2" fill="#9cdcfe"/>
<rect x="1781.2" y="155.3" width="9.1" height="2.2" fill="#9cdcfe"/>
<rect x="1791.6" y="155.3" width="10.4" height="2.2" fill="#9cdcfe"/>
<rect x="1803.3" y="155.3" width="1.3" height="2.2" fill="#999999"/>
<rect x="1805.9" y="155.3" width="3.9" height="2.2" fill="#c586c0"/>
<rect x="1811.1" y="155.3" width="23.4" height="2.2" fill="#ce9178"/>
<rect x="1750.0" y="159.0" width="7.8" height="2.2" fill="#c586c0"/>
<rect x="1759.1" y="159.0" width="1.3" height="2.2" fill="#999999"/>
<rect x="1761.7" y="159.0" width="18.2" height="2.2" fill="#9cdcfe"/>
<rect x="1781.2" y="159.0" width="9.1" height="2.2" fill="#9cdcfe"/>
<rect x="1791.6" y="159.0" width="10.4" height="2.2" fill="#9cdcfe"/>
<rect x="1803.3" y="159.0" width="1.3" height="2.2" fill="#999999"/>
<rect x="1805.9" y="159.0" width="3.9" height="2.2" fill="#c586c0"/>
<rect x="1811.1" y="159.0" width="23.4" height="2.2" fill="#ce9178"/>
<rect x="1750.0" y="166.5" width="7.8" height="2.2" fill="#c586c0"/>
<rect x="1759.1" y="166.5" width="7.8" height="2.2" fill="#569cd6"/>
<rect x="1768.2" y="166.5" width="13.0" height="2.2" fill="#dcdcaa"/>
<rect x="1752.6" y="170.2" width="9.1" height="2.2" fill="#9cdcfe"/>
<rect x="1752.6" y="173.9" width="9.1" height="2.2" fill="#9cdcfe"/>
<rect x="1750.0" y="177.7" width="2.6" height="2.2" fill="#999999"/>
<rect x="1752.6" y="181.4" width="11.7" height="2.2" fill="#9cdcfe"/>
<rect x="1765.6" y="181.4" width="15.6" height="2.2" fill="#4ec9b0"/>
<rect x="1752.6" y="185.1" width="11.7" height="2.2" fill="#9cdcfe"/>
<rect x="1765.6" y="185.1" width="15.6" height="2.2" fill="#4ec9b0"/>
<rect x="1750.0" y="188.9" width="2.6" height="2.2" fill="#999999"/>
<rect x="1752.6" y="192.6" width="5.2" height="2.2" fill="#569cd6"/>
<rect x="1759.1" y="192.6" width="7.8" height="2.2" fill="#9cdcfe"/>
<rect x="1768.2" y="192.6" width="11.7" height="2.2" fill="#9cdcfe"/>
<rect x="1781.2" y="192.6" width="1.3" height="2.2" fill="#999999"/>
<rect x="1783.8" y="192.6" width="11.7" height="2.2" fill="#dcdcaa"/>
<rect x="1796.8" y="192.6" width="5.2" height="2.2" fill="#9cdcfe"/>
<rect x="1752.6" y="200.1" width="6.5" height="2.2" fill="#c586c0"/>
<rect x="1760.4" y="200.1" width="1.3" height="2.2" fill="#999999"/>
<rect x="1755.2" y="203.8" width="7.8" height="2.2" fill="#9cdcfe"/>
<rect x="1764.3" y="203.8" width="13.0" height="2.2" fill="#9cdcfe"/>
<rect x="1778.6" y="203.8" width="10.4" height="2.2" fill="#9cdcfe"/>
<rect x="1790.3" y="203.8" width="13.0" height="2.2" fill="#9cdcfe"/>
<rect x="1804.6" y="203.8" width="1.3" height="2.2" fill="#999999"/>
<rect x="1757.8" y="207.5" width="5.2" height="2.2" fill="#4ec9b0"/>
<rect x="1764.3" y="207.5" width="15.6" height="2.2" fill="#9cdcfe"/>
<rect x="1781.2" y="207.5" width="10.4" height="2.2" fill="#ce9178"/>
<rect x="1760.4" y="211.2" width="10.4" height="2.2" fill="#4ec9b0"/>
<rect x="1763.0" y="215.0" width="7.8" height="2.2" fill="#9cdcfe"/>
<rect x="1772.1" y="215.0" width="3.9" height="2.2" fill="#ce9178"/>
<rect x="1763.0" y="218.7" width="13.0" height="2.2" fill="#9cdcfe"/>
<rect x="1777.3" y="218.7" width="7.8" height="2.2" fill="#ce9178"/>
<rect x="1763.0" y="222.4" width="13.0" height="2.2" fill="#9cdcfe"/>
<rect x="1777.3" y="222.4" width="3.9" height="2.2" fill="#ce9178"/>
<rect x="1763.0" y="226.2" width="13.0" height="2.2" fill="#9cdcfe"/>
<rect x="1777.3" y="226.2" width="3.9" height="2.2" fill="#b5cea8"/>
<rect x="1763.0" y="229.9" width="7.8" height="2.2" fill="#9cdcfe"/>
<rect x="1772.1" y="229.9" width="3.9" height="2.2" fill="#ce9178"/>
<rect x="1763.0" y="233.6" width="13.0" height="2.2" fill="#9cdcfe"/>
<rect x="1777.3" y="233.6" width="3.9" height="2.2" fill="#b5cea8"/>
<rect x="1763.0" y="237.4" width="11.7" height="2.2" fill="#9cdcfe"/>
<rect x="1776.0" y="237.4" width="3.9" height="2.2" fill="#ce9178"/>
<rect x="1763.0" y="241.1" width="13.0" height="2.2" fill="#9cdcfe"/>
<rect x="1777.3" y="241.1" width="7.8" height="2.2" fill="#ce9178"/>
<rect x="1763.0" y="244.8" width="7.8" height="2.2" fill="#9cdcfe"/>
<rect x="1772.1" y="244.8" width="10.4" height="2.2" fill="#ce9178"/>
<rect x="1760.4" y="248.5" width="1.3" height="2.2" fill="#999999"/>
<rect x="1760.4" y="252.3" width="7.8" height="2.2" fill="#4ec9b0"/>
<rect x="1763.0" y="256.0" width="10.4" height="2.2" fill="#9cdcfe"/>
<rect x="1774.7" y="256.0" width="3.9" height="2.2" fill="#b5cea8"/>
<rect x="1763.0" y="259.7" width="14.3" height="2.2" fill="#9cdcfe"/>
<rect x="1778.6" y="259.7" width="3.9" height="2.2" fill="#b5cea8"/>
<rect x="1763.0" y="263.5" width="7.8" height="2.2" fill="#9cdcfe"/>
<rect x="1772.1" y="263.5" width="5.2" height="2.2" fill="#b5cea8"/>
<rect x="1763.0" y="267.2" width="14.3" height="2.2" fill="#9cdcfe"/>
<rect x="1778.6" y="267.2" width="7.8" height="2.2" fill="#b5cea8"/>
<rect x="1763.0" y="270.9" width="11.7" height="2.2" fill="#9cdcfe"/>
<rect x="1776.0" y="270.9" width="7.8" height="2.2" fill="#b5cea8"/>
<rect x="1763.0" y="274.7" width="10.4" height="2.2" fill="#9cdcfe"/>
<rect x="1774.7" y="274.7" width="5.2" height="2.2" fill="#ce9178"/>
<rect x="1760.4" y="278.4" width="1.3" height="2.2" fill="#999999"/>
<rect x="1760.4" y="282.1" width="15.6" height="2.2" fill="#4ec9b0"/>
<rect x="1777.3" y="282.1" width="10.4" height="2.2" fill="#9cdcfe"/>
<rect x="1789.0" y="282.1" width="11.7" height="2.2" fill="#9cdcfe"/>
<rect x="1802.0" y="282.1" width="1.3" height="2.2" fill="#999999"/>
<rect x="1757.8" y="285.8" width="6.5" height="2.2" fill="#4ec9b0"/>
<rect x="1757.8" y="289.6" width="13.0" height="2.2" fill="#4ec9b0"/>
<rect x="1772.1" y="289.6" width="15.6" height="2.2" fill="#9cdcfe"/>
<rect x="1789.0" y="289.6" width="10.4" height="2.2" fill="#ce9178"/>
<rect x="1800.7" y="289.6" width="6.5" height="2.2" fill="#9cdcfe"/>
<rect x="1808.5" y="289.6" width="2.6" height="2.2" fill="#999999"/>
<rect x="1757.8" y="293.3" width="5.2" height="2.2" fill="#4ec9b0"/>
<rect x="1760.4" y="297.0" width="13.0" height="2.2" fill="#9cdcfe"/>
<rect x="1774.7" y="297.0" width="5.2" height="2.2" fill="#ce9178"/>
<rect x="1760.4" y="300.8" width="11.7" height="2.2" fill="#9cdcfe"/>
<rect x="1773.4" y="300.8" width="6.5" height="2.2" fill="#b5cea8"/>
<rect x="1760.4" y="304.5" width="9.1" height="2.2" fill="#9cdcfe"/>
<rect x="1770.8" y="304.5" width="7.8" height="2.2" fill="#b5cea8"/>
<rect x="1760.4" y="308.2" width="11.7" height="2.2" fill="#9cdcfe"/>
<rect x="1773.4" y="308.2" width="3.9" height="2.2" fill="#ce9178"/>
<rect x="1760.4" y="312.0" width="11.7" height="2.2" fill="#9cdcfe"/>
<rect x="1773.4" y="312.0" width="7.8" height="2.2" fill="#ce9178"/>
<rect x="1760.4" y="315.7" width="9.1" height="2.2" fill="#9cdcfe"/>
<rect x="1770.8" y="315.7" width="5.2" height="2.2" fill="#b5cea8"/>
<rect x="1757.8" y="319.4" width="1.3" height="2.2" fill="#999999"/>
<rect x="1757.8" y="326.9" width="5.2" height="2.2" fill="#999999"/>
<rect x="1764.3" y="326.9" width="3.9" height="2.2" fill="#999999"/>
<rect x="1769.5" y="326.9" width="5.2" height="2.2" fill="#999999"/>
<rect x="1776.0" y="326.9" width="3.9" height="2.2" fill="#999999"/>
<rect x="1781.2" y="326.9" width="6.5" height="2.2" fill="#999999"/>
<rect x="1789.0" y="326.9" width="3.9" height="2.2" fill="#999999"/>
<rect x="1794.2" y="326.9" width="9.1" height="2.2" fill="#999999"/>
<rect x="1804.6" y="326.9" width="5.2" height="2.2" fill="#999999"/>
<rect x="1811.1" y="326.9" width="7.8" height="2.2" fill="#999999"/>
<rect x="1820.2" y="326.9" width="1.3" height="2.2" fill="#999999"/>
<rect x="1822.8" y="326.9" width="3.9" height="2.2" fill="#999999"/>
<rect x="1757.8" y="330.6" width="7.8" height="2.2" fill="#9cdcfe"/>
<rect x="1755.2" y="334.3" width="7.8" height="2.2" fill="#4ec9b0"/>
<rect x="1755.2" y="338.1" width="10.4" height="2.2" fill="#4ec9b0"/>
<rect x="1766.9" y="338.1" width="6.5" height="2.2" fill="#9cdcfe"/>
<rect x="1774.7" y="338.1" width="6.5" height="2.2" fill="#9cdcfe"/>
<rect x="1782.5" y="338.1" width="18.2" height="2.2" fill="#9cdcfe"/>
<rect x="1802.0" y="338.1" width="3.9" height="2.2" fill="#999999"/>
<rect x="1757.8" y="341.8" width="7.8" height="2.2" fill="#4ec9b0"/>
<rect x="1760.4" y="345.5" width="11.7" height="2.2" fill="#9cdcfe"/>
<rect x="1773.4" y="345.5" width="5.2" height="2.2" fill="#ce9178"/>
<rect x="1760.4" y="349.3" width="13.0" height="2.2" fill="#9cdcfe"/>
<rect x="1774.7" y="349.3" width="7.8" height="2.2" fill="#b5cea8"/>
<rect x="1760.4" y="353.0" width="10.4" height="2.2" fill="#9cdcfe"/>
<rect x="1772.1" y="353.0" width="7.8" height="2.2" fill="#b5cea8"/>
<rect x="1760.4" y="356.7" width="13.0" height="2.2" fill="#9cdcfe"/>
<rect x="1774.7" y="356.7" width="6.5" height="2.2" fill="#b5cea8"/>
<rect x="1760.4" y="360.5" width="7.8" height="2.2" fill="#9cdcfe"/>
<rect x="1769.5" y="360.5" width="5.2" height="2.2" fill="#b5cea8"/>
<rect x="1757.8" y="364.2" width="1.3" height="2.2" fill="#999999"/>
<rect x="1757.8" y="367.9" width="9.1" height="2.2" fill="#4ec9b0"/>
<rect x="1760.4" y="371.6" width="11.7" height="2.2" fill="#9cdcfe"/>
<rect x="1773.4" y="371.6" width="7.8" height="2.2" fill="#ce9178"/>
<rect x="1760.4" y="375.4" width="7.8" height="2.2" fill="#9cdcfe"/>
<rect x="1769.5" y="375.4" width="7.8" height="2.2" fill="#b5cea8"/>
<rect x="1760.4" y="379.1" width="14.3" height="2.2" fill="#9cdcfe"/>
<rect x="1776.0" y="379.1" width="7.8" height="2.2" fill="#b5cea8"/>
<rect x="1760.4" y="382.8" width="10.4" height="2.2" fill="#9cdcfe"/>
<rect x="1772.1" y="382.8" width="7.8" height="2.2" fill="#b5cea8"/>
<rect x="1760.4" y="386.6" width="14.3" height="2.2" fill="#9cdcfe"/>
<rect x="1776.0" y="386.6" width="6.5" height="2.2" fill="#ce9178"/>
<rect x="1757.8" y="390.3" width="1.3" height="2.2" fill="#999999"/>
<rect x="1757.8" y="394.0" width="9.1" height="2.2" fill="#4ec9b0"/>
<rect x="1760.4" y="397.8" width="11.7" height="2.2" fill="#9cdcfe"/>
<rect x="1773.4" y="397.8" width="6.5" height="2.2" fill="#ce9178"/>
<rect x="1760.4" y="401.5" width="13.0" height="2.2" fill="#9cdcfe"/>
<rect x="1774.7" y="401.5" width="5.2" height="2.2" fill="#b5cea8"/>
<rect x="1760.4" y="405.2" width="7.8" height="2.2" fill="#9cdcfe"/>
<rect x="1769.5" y="405.2" width="5.2" height="2.2" fill="#b5cea8"/>
<rect x="1760.4" y="408.9" width="9.1" height="2.2" fill="#9cdcfe"/>
<rect x="1770.8" y="408.9" width="7.8" height="2.2" fill="#ce9178"/>
<rect x="1760.4" y="412.7" width="11.7" height="2.2" fill="#9cdcfe"/>
<rect x="1773.4" y="412.7" width="6.5" height="2.2" fill="#b5cea8"/>
<rect x="1755.2" y="416.4" width="1.3" height="2.2" fill="#999999"/>
<rect x="1755.2" y="420.1" width="9.1" height="2.2" fill="#4ec9b0"/>
<rect x="1755.2" y="423.9" width="10.4" height="2.2" fill="#4ec9b0"/>
<rect x="1757.8" y="427.6" width="6.5" height="2.2" fill="#9cdcfe"/>
<rect x="1765.6" y="427.6" width="1.3" height="2.2" fill="#999999"/>
<rect x="1768.2" y="427.6" width="15.6" height="2.2" fill="#9cdcfe"/>
<rect x="1785.1" y="427.6" width="3.9" height="2.2" fill="#999999"/>
<rect x="1790.3" y="427.6" width="2.6" height="2.2" fill="#999999"/>
<rect x="1757.8" y="431.3" width="7.8" height="2.2" fill="#9cdcfe"/>
<rect x="1766.9" y="431.3" width="6.5" height="2.2" fill="#b5cea8"/>
<rect x="1757.8" y="435.1" width="11.7" height="2.2" fill="#9cdcfe"/>
<rect x="1770.8" y="435.1" width="10.4" height="2.2" fill="#b5cea8"/>
<rect x="1757.8" y="438.8" width="9.1" height="2.2" fill="#9cdcfe"/>
<rect x="1768.2" y="438.8" width="9.1" height="2.2" fill="#b5cea8"/>
<rect x="1757.8" y="442.5" width="14.3" height="2.2" fill="#9cdcfe"/>
<rect x="1773.4" y="442.5" width="9.1" height="2.2" fill="#b5cea8"/>
<rect x="1757.8" y="446.2" width="14.3" height="2.2" fill="#9cdcfe"/>
<rect x="1773.4" y="446.2" width="9.1" height="2.2" fill="#ce9178"/>
<rect x="1757.8" y="450.0" width="3.9" height="2.2" fill="#9cdcfe"/>
<rect x="1763.0" y="450.0" width="2.6" height="2.2" fill="#999999"/>
<rect x="1757.8" y="453.7" width="7.8" height="2.2" fill="#9cdcfe"/>
<rect x="1766.9" y="453.7" width="2.6" height="2.2" fill="#999999"/>
<rect x="1770.8" y="453.7" width="18.2" height="2.2" fill="#9cdcfe"/>
<rect x="1790.3" y="453.7" width="3.9" height="2.2" fill="#999999"/>
<rect x="1795.5" y="453.7" width="2.6" height="2.2" fill="#999999"/>
<rect x="1757.8" y="457.4" width="7.8" height="2.2" fill="#9cdcfe"/>
<rect x="1766.9" y="457.4" width="3.9" height="2.2" fill="#999999"/>
<rect x="1772.1" y="457.4" width="1.3" height="2.2" fill="#999999"/>
<rect x="1774.7" y="457.4" width="13.0" height="2.2" fill="#b5cea8"/>
<rect x="1789.0" y="457.4" width="5.2" height="2.2" fill="#9cdcfe"/>
<rect x="1757.8" y="461.2" width="7.8" height="2.2" fill="#9cdcfe"/>
<rect x="1766.9" y="461.2" width="2.6" height="2.2" fill="#999999"/>
<rect x="1757.8" y="464.9" width="7.8" height="2.2" fill="#9cdcfe"/>
<rect x="1766.9" y="464.9" width="2.6" height="2.2" fill="#999999"/>
<rect x="1757.8" y="468.6" width="13.0" height="2.2" fill="#9cdcfe"/>
<rect x="1772.1" y="468.6" width="18.2" height="2.2" fill="#9cdcfe"/>
<rect x="1791.6" y="468.6" width="2.6" height="2.2" fill="#999999"/>
<rect x="1757.8" y="472.4" width="13.0" height="2.2" fill="#9cdcfe"/>
<rect x="1772.1" y="472.4" width="2.6" height="2.2" fill="#999999"/>
<rect x="1755.2" y="476.1" width="1.3" height="2.2" fill="#999999"/>
<rect x="1755.2" y="479.8" width="6.5" height="2.2" fill="#4ec9b0"/>
<rect x="1763.0" y="479.8" width="7.8" height="2.2" fill="#ce9178"/>
<rect x="1772.1" y="479.8" width="10.4" height="2.2" fill="#9cdcfe"/>
<rect x="1783.8" y="479.8" width="1.3" height="2.2" fill="#999999"/>
<rect x="1786.4" y="479.8" width="11.7" height="2.2" fill="#9cdcfe"/>
<rect x="1799.4" y="479.8" width="9.1" height="2.2" fill="#ce9178"/>
<rect x="1757.8" y="483.5" width="3.9" height="2.2" fill="#999999"/>
<rect x="1763.0" y="483.5" width="7.8" height="2.2" fill="#999999"/>
<rect x="1757.8" y="487.3" width="6.5" height="2.2" fill="#4ec9b0"/>
<rect x="1755.2" y="491.0" width="5.2" height="2.2" fill="#4ec9b0"/>
<rect x="1753.9" y="494.7" width="5.2" height="2.2" fill="#4ec9b0"/>
<rect x="1752.6" y="498.5" width="5.2" height="2.2" fill="#4ec9b0"/>
<rect x="1751.3" y="502.2" width="5.2" height="2.2" fill="#4ec9b0"/>
<rect x="1750.0" y="505.9" width="3.9" height="2.2" fill="#999999"/>
<rect x="1760.4" y="509.7" width="7.8" height="2.2" fill="#9cdcfe"/>
<rect x="1769.5" y="509.7" width="5.2" height="2.2" fill="#ce9178"/>
<rect x="1760.4" y="513.4" width="6.5" height="2.2" fill="#4ec9b0"/>
<rect x="1768.2" y="513.4" width="11.7" height="2.2" fill="#9cdcfe"/>
<rect x="1760.4" y="517.1" width="11.7" height="2.2" fill="#4ec9b0"/>
<rect x="1773.4" y="517.1" width="3.9" height="2.2" fill="#ce9178"/>
<rect x="1763.0" y="520.8" width="13.0" height="2.2" fill="#4ec9b0"/>
<rect x="1777.3" y="520.8" width="5.2" height="2.2" fill="#9cdcfe"/>
<rect x="1757.8" y="524.6" width="15.6" height="2.2" fill="#4ec9b0"/>
<rect x="1774.7" y="524.6" width="7.8" height="2.2" fill="#b5cea8"/>
<rect x="1763.0" y="528.3" width="7.8" height="2.2" fill="#4ec9b0"/>
<rect x="1772.1" y="528.3" width="10.4" height="2.2" fill="#b5cea8"/>
<rect x="1757.8" y="532.0" width="10.4" height="2.2" fill="#9cdcfe"/>
<rect x="1769.5" y="532.0" width="5.2" height="2.2" fill="#b5cea8"/>
<rect x="1760.4" y="535.8" width="7.8" height="2.2" fill="#4ec9b0"/>
<rect x="1769.5" y="535.8" width="9.1" height="2.2" fill="#ce9178"/>
<rect x="1757.8" y="539.5" width="6.5" height="2.2" fill="#9cdcfe"/>
<rect x="1765.6" y="539.5" width="9.1" height="2.2" fill="#ce9178"/>
<rect x="1760.4" y="543.2" width="6.5" height="2.2" fill="#9cdcfe"/>
<rect x="1768.2" y="543.2" width="11.7" height="2.2" fill="#ce9178"/>
<rect x="1763.0" y="547.0" width="9.1" height="2.2" fill="#4ec9b0"/>
<rect x="1773.4" y="547.0" width="6.5" height="2.2" fill="#9cdcfe"/>
<rect x="1760.4" y="550.7" width="15.6" height="2.2" fill="#9cdcfe"/>
<rect x="1777.3" y="550.7" width="3.9" height="2.2" fill="#b5cea8"/>
<rect x="1763.0" y="554.4" width="15.6" height="2.2" fill="#4ec9b0"/>
<rect x="1779.9" y="554.4" width="6.5" height="2.2" fill="#ce9178"/>
<rect x="1760.4" y="558.1" width="7.8" height="2.2" fill="#4ec9b0"/>
<rect x="1769.5" y="558.1" width="10.4" height="2.2" fill="#b5cea8"/>
<rect x="1763.0" y="561.9" width="9.1" height="2.2" fill="#9cdcfe"/>
<rect x="1773.4" y="561.9" width="5.2" height="2.2" fill="#9cdcfe"/>
<rect x="1760.4" y="565.6" width="9.1" height="2.2" fill="#9cdcfe"/>
<rect x="1770.8" y="565.6" width="11.7" height="2.2" fill="#9cdcfe"/>
<rect x="1760.4" y="569.3" width="7.8" height="2.2" fill="#4ec9b0"/>
<rect x="1769.5" y="569.3" width="9.1" height="2.2" fill="#b5cea8"/>
<rect x="1760.4" y="573.1" width="13.0" height="2.2" fill="#9cdcfe"/>
<rect x="1774.7" y="573.1" width="9.1" height="2.2" fill="#9cdcfe"/>
<rect x="1750.0" y="580.5" width="7.8" height="2.2" fill="#c586c0"/>
<rect x="1759.1" y="580.5" width="7.8" height="2.2" fill="#569cd6"/>
<rect x="1768.2" y="580.5" width="18.2" height="2.2" fill="#dcdcaa"/>
<rect x="1787.7" y="580.5" width="7.8" height="2.2" fill="#9cdcfe"/>
<rect x="1796.8" y="580.5" width="2.6" height="2.2" fill="#999999"/>
<rect x="1800.7" y="580.5" width="1.3" height="2.2" fill="#999999"/>
<rect x="1803.3" y="580.5" width="9.1" height="2.2" fill="#9cdcfe"/>
<rect x="1813.7" y="580.5" width="7.8" height="2.2" fill="#4ec9b0"/>
<rect x="1822.8" y="580.5" width="1.3" height="2.2" fill="#999999"/>
<rect x="1752.6" y="584.3" width="7.8" height="2.2" fill="#c586c0"/>
<rect x="1761.7" y="584.3" width="1.3" height="2.2" fill="#999999"/>
<rect x="1755.2" y="588.0" width="2.6" height="2.2" fill="#808080"/>
<rect x="1757.8" y="591.7" width="10.4" height="2.2" fill="#4ec9b0"/>
<rect x="1769.5" y="591.7" width="11.7" height="2.2" fill="#9cdcfe"/>
<rect x="1782.5" y="591.7" width="6.5" height="2.2" fill="#b5cea8"/>
<rect x="1790.3" y="591.7" width="3.9" height="2.2" fill="#b5cea8"/>
<rect x="1795.5" y="591.7" width="5.2" height="2.2" fill="#9cdcfe"/>
<rect x="1802.0" y="591.7" width="3.9" height="2.2" fill="#9cdcfe"/>
<rect x="1807.2" y="591.7" width="2.6" height="2.2" fill="#999999"/>
<rect x="1760.4" y="595.4" width="15.6" height="2.2" fill="#4ec9b0"/>
<rect x="1777.3" y="595.4" width="7.8" height="2.2" fill="#9cdcfe"/>
<rect x="1786.4" y="595.4" width="5.2" height="2.2" fill="#b5cea8"/>
<rect x="1792.9" y="595.4" width="5.2" height="2.2" fill="#b5cea8"/>
<rect x="1799.4" y="595.4" width="11.7" height="2.2" fill="#9cdcfe"/>
<rect x="1812.4" y="595.4" width="3.9" height="2.2" fill="#b5cea8"/>
<rect x="1817.6" y="595.4" width="3.9" height="2.2" fill="#b5cea8"/>
<rect x="1822.8" y="595.4" width="2.6" height="2.2" fill="#999999"/>
<rect x="1760.4" y="599.2" width="15.6" height="2.2" fill="#4ec9b0"/>
<rect x="1777.3" y="599.2" width="7.8" height="2.2" fill="#9cdcfe"/>
<rect x="1786.4" y="599.2" width="5.2" height="2.2" fill="#b5cea8"/>
<rect x="1792.9" y="599.2" width="5.2" height="2.2" fill="#b5cea8"/>
<rect x="1799.4" y="599.2" width="11.7" height="2.2" fill="#9cdcfe"/>
<rect x="1812.4" y="599.2" width="3.9" height="2.2" fill="#b5cea8"/>
<rect x="1817.6" y="599.2" width="3.9" height="2.2" fill="#b5cea8"/>
<rect x="1822.8" y="599.2" width="2.6" height="2.2" fill="#999999"/>
<rect x="1760.4" y="602.9" width="15.6" height="2.2" fill="#4ec9b0"/>
<rect x="1777.3" y="602.9" width="7.8" height="2.2" fill="#9cdcfe"/>
<rect x="1786.4" y="602.9" width="5.2" height="2.2" fill="#b5cea8"/>
<rect x="1792.9" y="602.9" width="5.2" height="2.2" fill="#b5cea8"/>
<rect x="1799.4" y="602.9" width="11.7" height="2.2" fill="#9cdcfe"/>
<rect x="1812.4" y="602.9" width="3.9" height="2.2" fill="#b5cea8"/>
<rect x="1817.6" y="602.9" width="3.9" height="2.2" fill="#b5cea8"/>
<rect x="1822.8" y="602.9" width="2.6" height="2.2" fill="#999999"/>
<rect x="1760.4" y="606.6" width="15.6" height="2.2" fill="#4ec9b0"/>
<rect x="1777.3" y="606.6" width="7.8" height="2.2" fill="#9cdcfe"/>
<rect x="1786.4" y="606.6" width="5.2" height="2.2" fill="#b5cea8"/>
<rect x="1792.9" y="606.6" width="5.2" height="2.2" fill="#b5cea8"/>
<rect x="1799.4" y="606.6" width="11.7" height="2.2" fill="#9cdcfe"/>
<rect x="1812.4" y="606.6" width="3.9" height="2.2" fill="#b5cea8"/>
<rect x="1817.6" y="606.6" width="3.9" height="2.2" fill="#b5cea8"/>
<rect x="1822.8" y="606.6" width="2.6" height="2.2" fill="#999999"/>
<rect x="1760.4" y="610.4" width="15.6" height="2.2" fill="#4ec9b0"/>
<rect x="1777.3" y="610.4" width="7.8" height="2.2" fill="#9cdcfe"/>
<rect x="1786.4" y="610.4" width="5.2" height="2.2" fill="#b5cea8"/>
<rect x="1792.9" y="610.4" width="5.2" height="2.2" fill="#b5cea8"/>
<rect x="1799.4" y="610.4" width="11.7" height="2.2" fill="#9cdcfe"/>
<rect x="1812.4" y="610.4" width="3.9" height="2.2" fill="#b5cea8"/>
<rect x="1817.6" y="610.4" width="3.9" height="2.2" fill="#b5cea8"/>
<rect x="1822.8" y="610.4" width="2.6" height="2.2" fill="#999999"/>
<rect x="1760.4" y="614.1" width="6.5" height="2.2" fill="#9cdcfe"/>
<rect x="1768.2" y="614.1" width="7.8" height="2.2" fill="#ce9178"/>
<rect x="1777.3" y="614.1" width="7.8" height="2.2" fill="#9cdcfe"/>
<rect x="1786.4" y="614.1" width="13.0" height="2.2" fill="#ce9178"/>
<rect x="1800.7" y="614.1" width="2.6" height="2.2" fill="#999999"/>
<rect x="1760.4" y="617.8" width="15.6" height="2.2" fill="#4ec9b0"/>
<rect x="1777.3" y="617.8" width="11.7" height="2.2" fill="#9cdcfe"/>
<rect x="1790.3" y="617.8" width="6.5" height="2.2" fill="#b5cea8"/>
<rect x="1798.1" y="617.8" width="10.4" height="2.2" fill="#9cdcfe"/>
<rect x="1809.8" y="617.8" width="6.5" height="2.2" fill="#b5cea8"/>
<rect x="1817.6" y="617.8" width="3.9" height="2.2" fill="#999999"/>
<rect x="1822.8" y="617.8" width="3.9" height="2.2" fill="#b5cea8"/>
<rect x="1760.4" y="621.6" width="13.0" height="2.2" fill="#4ec9b0"/>
<rect x="1774.7" y="621.6" width="6.5" height="2.2" fill="#ce9178"/>
<rect x="1782.5" y="621.6" width="13.0" height="2.2" fill="#b5cea8"/>
<rect x="1796.8" y="621.6" width="9.1" height="2.2" fill="#9cdcfe"/>
<rect x="1807.2" y="621.6" width="10.4" height="2.2" fill="#b5cea8"/>
<rect x="1818.9" y="621.6" width="6.5" height="2.2" fill="#9cdcfe"/>
<rect x="1826.7" y="621.6" width="7.8" height="2.2" fill="#9cdcfe"/>
<rect x="1763.0" y="625.3" width="6.5" height="2.2" fill="#4ec9b0"/>
<rect x="1770.8" y="625.3" width="7.8" height="2.2" fill="#ce9178"/>
<rect x="1779.9" y="625.3" width="6.5" height="2.2" fill="#9cdcfe"/>
<rect x="1760.4" y="629.0" width="15.6" height="2.2" fill="#4ec9b0"/>
<rect x="1777.3" y="629.0" width="11.7" height="2.2" fill="#9cdcfe"/>
<rect x="1790.3" y="629.0" width="6.5" height="2.2" fill="#b5cea8"/>
<rect x="1798.1" y="629.0" width="10.4" height="2.2" fill="#9cdcfe"/>
<rect x="1809.8" y="629.0" width="6.5" height="2.2" fill="#b5cea8"/>
<rect x="1817.6" y="629.0" width="3.9" height="2.2" fill="#999999"/>
<rect x="1822.8" y="629.0" width="3.9" height="2.2" fill="#b5cea8"/>
<rect x="1828.0" y="629.0" width="10.4" height="2.2" fill="#9cdcfe"/>
<rect x="1763.0" y="632.7" width="6.5" height="2.2" fill="#4ec9b0"/>
<rect x="1770.8" y="632.7" width="7.8" height="2.2" fill="#ce9178"/>
<rect x="1779.9" y="632.7" width="6.5" height="2.2" fill="#9cdcfe"/>
<rect x="1760.4" y="636.5" width="11.7" height="2.2" fill="#4ec9b0"/>
<rect x="1760.4" y="640.2" width="3.9" height="2.2" fill="#999999"/>
<rect x="1765.6" y="640.2" width="2.6" height="2.2" fill="#999999"/>
<rect x="1760.4" y="643.9" width="7.8" height="2.2" fill="#4ec9b0"/>
<rect x="1763.0" y="647.7" width="13.0" height="2.2" fill="#9cdcfe"/>
<rect x="1777.3" y="647.7" width="6.5" height="2.2" fill="#ce9178"/>
<rect x="1763.0" y="651.4" width="13.0" height="2.2" fill="#9cdcfe"/>
<rect x="1777.3" y="651.4" width="5.2" height="2.2" fill="#ce9178"/>
<rect x="1763.0" y="655.1" width="11.7" height="2.2" fill="#9cdcfe"/>
<rect x="1776.0" y="655.1" width="10.4" height="2.2" fill="#ce9178"/>
<rect x="1763.0" y="658.9" width="9.1" height="2.2" fill="#9cdcfe"/>
<rect x="1773.4" y="658.9" width="9.1" height="2.2" fill="#b5cea8"/>
<rect x="1757.8" y="662.6" width="1.3" height="2.2" fill="#999999"/>
<rect x="1760.4" y="666.3" width="9.1" height="2.2" fill="#4ec9b0"/>
<rect x="1770.8" y="666.3" width="13.0" height="2.2" fill="#ce9178"/>
<rect x="1785.1" y="666.3" width="7.8" height="2.2" fill="#9cdcfe"/>
<rect x="1794.2" y="666.3" width="2.6" height="2.2" fill="#999999"/>
<rect x="1760.4" y="670.0" width="6.5" height="2.2" fill="#4ec9b0"/>
<rect x="1760.4" y="673.8" width="9.1" height="2.2" fill="#4ec9b0"/>
<rect x="1763.0" y="677.5" width="10.4" height="2.2" fill="#9cdcfe"/>
<rect x="1774.7" y="677.5" width="6.5" height="2.2" fill="#ce9178"/>
<rect x="1763.0" y="681.2" width="9.1" height="2.2" fill="#9cdcfe"/>
<rect x="1773.4" y="681.2" width="6.5" height="2.2" fill="#b5cea8"/>
<rect x="1781.2" y="681.2" width="5.2" height="2.2" fill="#b5cea8"/>
<rect x="1787.7" y="681.2" width="3.9" height="2.2" fill="#b5cea8"/>
<rect x="1763.0" y="685.0" width="9.1" height="2.2" fill="#9cdcfe"/>
<rect x="1773.4" y="685.0" width="3.9" height="2.2" fill="#b5cea8"/>
<rect x="1763.0" y="688.7" width="10.4" height="2.2" fill="#9cdcfe"/>
<rect x="1774.7" y="688.7" width="15.6" height="2.2" fill="#9cdcfe"/>
<rect x="1791.6" y="688.7" width="18.2" height="2.2" fill="#b5cea8"/>
<rect x="1811.1" y="688.7" width="3.9" height="2.2" fill="#9cdcfe"/>
<rect x="1816.3" y="688.7" width="10.4" height="2.2" fill="#b5cea8"/>
<rect x="1760.4" y="692.4" width="1.3" height="2.2" fill="#999999"/>
<rect x="1760.4" y="696.2" width="9.1" height="2.2" fill="#4ec9b0"/>
<rect x="1770.8" y="696.2" width="13.0" height="2.2" fill="#ce9178"/>
<rect x="1785.1" y="696.2" width="7.8" height="2.2" fill="#9cdcfe"/>
<rect x="1794.2" y="696.2" width="2.6" height="2.2" fill="#999999"/>
<rect x="1760.4" y="699.9" width="6.5" height="2.2" fill="#4ec9b0"/>
<rect x="1760.4" y="703.6" width="15.6" height="2.2" fill="#4ec9b0"/>
<rect x="1777.3" y="703.6" width="11.7" height="2.2" fill="#9cdcfe"/>
<rect x="1790.3" y="703.6" width="10.4" height="2.2" fill="#9cdcfe"/>
<rect x="1802.0" y="703.6" width="7.8" height="2.2" fill="#9cdcfe"/>
<rect x="1760.4" y="707.3" width="6.5" height="2.2" fill="#4ec9b0"/>
<rect x="1768.2" y="707.3" width="10.4" height="2.2" fill="#9cdcfe"/>
<rect x="1779.9" y="707.3" width="3.9" height="2.2" fill="#999999"/>
<rect x="1785.1" y="707.3" width="10.4" height="2.2" fill="#9cdcfe"/>
<rect x="1796.8" y="707.3" width="1.3" height="2.2" fill="#999999"/>
<rect x="1760.4" y="711.1" width="10.4" height="2.2" fill="#4ec9b0"/>
<rect x="1772.1" y="711.1" width="7.8" height="2.2" fill="#b5cea8"/>
<rect x="1781.2" y="711.1" width="10.4" height="2.2" fill="#9cdcfe"/>
<rect x="1792.9" y="711.1" width="10.4" height="2.2" fill="#9cdcfe"/>
<rect x="1804.6" y="711.1" width="7.8" height="2.2" fill="#9cdcfe"/>
<rect x="1813.7" y="711.1" width="5.2" height="2.2" fill="#9cdcfe"/>
<rect x="1820.2" y="711.1" width="3.9" height="2.2" fill="#9cdcfe"/>
<rect x="1825.4" y="711.1" width="3.9" height="2.2" fill="#9cdcfe"/>
<rect x="1757.8" y="714.8" width="1.3" height="2.2" fill="#999999"/>
<rect x="1750.0" y="718.5" width="7.8" height="2.2" fill="#9cdcfe"/>
<rect x="1759.1" y="718.5" width="10.4" height="2.2" fill="#9cdcfe"/>
<rect x="1770.8" y="718.5" width="18.2" height="2.2" fill="#9cdcfe"/>
<rect x="1790.3" y="718.5" width="1.3" height="2.2" fill="#9cdcfe"/>
<rect x="1752.6" y="722.3" width="7.8" height="2.2" fill="#9cdcfe"/>
<rect x="1761.7" y="722.3" width="1.3" height="2.2" fill="#9cdcfe"/>
<rect x="1755.2" y="726.0" width="2.6" height="2.2" fill="#4ec9b0"/>
<rect x="1757.8" y="729.7" width="6.5" height="2.2" fill="#4ec9b0"/>
<rect x="1760.4" y="733.5" width="13.0" height="2.2" fill="#9cdcfe"/>
<rect x="1760.4" y="737.2" width="20.8" height="2.2" fill="#9cdcfe"/>
<rect x="1782.5" y="737.2" width="6.5" height="2.2" fill="#9cdcfe"/>
<rect x="1790.3" y="737.2" width="9.1" height="2.2" fill="#9cdcfe"/>
<rect x="1760.4" y="740.9" width="16.9" height="2.2" fill="#9cdcfe"/>
<rect x="1760.4" y="744.6" width="16.9" height="2.2" fill="#9cdcfe"/>
<rect x="1778.6" y="744.6" width="33.8" height="2.2" fill="#9cdcfe"/>
<rect x="1813.7" y="744.6" width="3.9" height="2.2" fill="#9cdcfe"/>
<rect x="1760.4" y="748.4" width="16.9" height="2.2" fill="#9cdcfe"/>
<rect x="1778.6" y="748.4" width="6.5" height="2.2" fill="#9cdcfe"/>
<rect x="1786.4" y="748.4" width="7.8" height="2.2" fill="#9cdcfe"/>
<rect x="1760.4" y="752.1" width="31.2" height="2.2" fill="#9cdcfe"/>
<rect x="1757.8" y="755.8" width="2.6" height="2.2" fill="#9cdcfe"/>
<rect x="1757.8" y="759.6" width="15.6" height="2.2" fill="#4ec9b0"/>
<rect x="1774.7" y="759.6" width="2.6" height="2.2" fill="#9cdcfe"/>
<rect x="1757.8" y="763.3" width="23.4" height="2.2" fill="#4ec9b0"/>
<rect x="1760.4" y="767.0" width="14.3" height="2.2" fill="#9cdcfe"/>
<rect x="1760.4" y="770.8" width="16.9" height="2.2" fill="#9cdcfe"/>
<rect x="1778.6" y="770.8" width="5.2" height="2.2" fill="#9cdcfe"/>
<rect x="1785.1" y="770.8" width="6.5" height="2.2" fill="#9cdcfe"/>
<rect x="1760.4" y="774.5" width="44.2" height="2.2" fill="#9cdcfe"/>
<rect x="1805.9" y="774.5" width="2.6" height="2.2" fill="#9cdcfe"/>
<rect x="1809.8" y="774.5" width="3.9" height="2.2" fill="#9cdcfe"/>
<rect x="1757.8" y="778.2" width="2.6" height="2.2" fill="#9cdcfe"/>
<rect x="1757.8" y="781.9" width="16.9" height="2.2" fill="#4ec9b0"/>
<rect x="1776.0" y="781.9" width="16.9" height="2.2" fill="#9cdcfe"/>
<rect x="1794.2" y="781.9" width="2.6" height="2.2" fill="#9cdcfe"/>
<rect x="1757.8" y="785.7" width="14.3" height="2.2" fill="#4ec9b0"/>
<rect x="1773.4" y="785.7" width="13.0" height="2.2" fill="#9cdcfe"/>
<rect x="1787.7" y="785.7" width="16.9" height="2.2" fill="#9cdcfe"/>
<rect x="1805.9" y="785.7" width="28.6" height="2.2" fill="#b5cea8"/>
<rect x="1835.8" y="785.7" width="2.6" height="2.2" fill="#808080"/>
<rect x="1757.8" y="789.4" width="14.3" height="2.2" fill="#4ec9b0"/>
<rect x="1773.4" y="789.4" width="13.0" height="2.2" fill="#9cdcfe"/>
<rect x="1787.7" y="789.4" width="16.9" height="2.2" fill="#9cdcfe"/>
<rect x="1805.9" y="789.4" width="28.6" height="2.2" fill="#b5cea8"/>
<rect x="1835.8" y="789.4" width="2.6" height="2.2" fill="#808080"/>
<rect x="1757.8" y="793.1" width="14.3" height="2.2" fill="#4ec9b0"/>
<rect x="1773.4" y="793.1" width="13.0" height="2.2" fill="#9cdcfe"/>
<rect x="1787.7" y="793.1" width="16.9" height="2.2" fill="#9cdcfe"/>
<rect x="1805.9" y="793.1" width="28.6" height="2.2" fill="#b5cea8"/>
<rect x="1835.8" y="793.1" width="2.6" height="2.2" fill="#808080"/>
<rect x="1757.8" y="796.9" width="9.1" height="2.2" fill="#4ec9b0"/>
<rect x="1768.2" y="796.9" width="20.8" height="2.2" fill="#ce9178"/>
<rect x="1790.3" y="796.9" width="33.8" height="2.2" fill="#b5cea8"/>
<rect x="1825.4" y="796.9" width="13.0" height="2.2" fill="#9cdcfe"/>
<rect x="1839.7" y="796.9" width="1.3" height="2.2" fill="#808080"/>
<rect x="1757.8" y="800.6" width="9.1" height="2.2" fill="#4ec9b0"/>
<rect x="1768.2" y="800.6" width="20.8" height="2.2" fill="#ce9178"/>
<rect x="1790.3" y="800.6" width="33.8" height="2.2" fill="#b5cea8"/>
<rect x="1825.4" y="800.6" width="13.0" height="2.2" fill="#9cdcfe"/>
<rect x="1839.7" y="800.6" width="1.3" height="2.2" fill="#808080"/>
<rect x="1757.8" y="804.3" width="9.1" height="2.2" fill="#4ec9b0"/>
<rect x="1768.2" y="804.3" width="20.8" height="2.2" fill="#ce9178"/>
<rect x="1790.3" y="804.3" width="33.8" height="2.2" fill="#b5cea8"/>
<rect x="1825.4" y="804.3" width="13.0" height="2.2" fill="#9cdcfe"/>
<rect x="1839.7" y="804.3" width="1.3" height="2.2" fill="#808080"/>
<rect x="1757.8" y="808.1" width="9.1" height="2.2" fill="#4ec9b0"/>
<rect x="1768.2" y="808.1" width="20.8" height="2.2" fill="#ce9178"/>
<rect x="1790.3" y="808.1" width="33.8" height="2.2" fill="#b5cea8"/>
<rect x="1825.4" y="808.1" width="13.0" height="2.2" fill="#9cdcfe"/>
<rect x="1839.7" y="808.1" width="1.3" height="2.2" fill="#808080"/>
<rect x="1757.8" y="811.8" width="9.1" height="2.2" fill="#4ec9b0"/>
<rect x="1768.2" y="811.8" width="20.8" height="2.2" fill="#ce9178"/>
<rect x="1790.3" y="811.8" width="33.8" height="2.2" fill="#b5cea8"/>
<rect x="1825.4" y="811.8" width="13.0" height="2.2" fill="#9cdcfe"/>
<rect x="1839.7" y="811.8" width="1.3" height="2.2" fill="#808080"/>
<rect x="1757.8" y="815.5" width="9.1" height="2.2" fill="#4ec9b0"/>
<rect x="1768.2" y="815.5" width="20.8" height="2.2" fill="#ce9178"/>
<rect x="1790.3" y="815.5" width="33.8" height="2.2" fill="#b5cea8"/>
<rect x="1825.4" y="815.5" width="13.0" height="2.2" fill="#9cdcfe"/>
<rect x="1839.7" y="815.5" width="1.3" height="2.2" fill="#808080"/>
<rect x="1755.2" y="819.2" width="3.9" height="2.2" fill="#808080"/>
<rect x="1752.6" y="823.0" width="2.6" height="2.2" fill="#999999"/>
<rect x="1750.0" y="826.7" width="1.3" height="2.2" fill="#999999"/>
</g>
<rect x="1750" y="122.5" width="91" height="3.5" fill="#264f78" opacity="0.9"/>
<rect x="1750" y="140.0" width="91" height="3.5" fill="#264f78" opacity="0.9"/>
<rect x="1750" y="339.5" width="91" height="3.5" fill="#264f78" opacity="0.9"/>
<rect x="1750" y="740.0" width="91" height="3.5" fill="#264f78" opacity="0.9"/>
<rect x="1750" y="762.5" width="91" height="3.5" fill="#264f78" opacity="0.9"/>
<rect x="1792" y="122.5" width="9" height="3.5" fill="#3b8eea"/><rect x="1756" y="140" width="6" height="3.5" fill="#3b8eea"/><rect x="1772" y="740" width="5" height="3.5" fill="#3b8eea"/><rect x="1780" y="762.5" width="7" height="3.5" fill="#3b8eea"/>
<rect x="1842" y="772" width="18" height="144" fill="#3a3a3a" opacity="0.85"/>
<rect x="1847" y="121" width="6" height="9" fill="#3b8eea"/>
<rect x="1847" y="142" width="6" height="9" fill="#3b8eea"/>
<rect x="1847" y="330" width="6" height="9" fill="#7a62c0"/>
<rect x="1853" y="359" width="6" height="8" fill="#3b8eea"/>
<rect x="1847" y="371" width="6" height="9" fill="#7a62c0"/>
<rect x="1847" y="416" width="6" height="9" fill="#e0408a"/>
<rect x="1847" y="445" width="6" height="9" fill="#e0408a"/>
<rect x="1847" y="473" width="6" height="9" fill="#e0408a"/>
<rect x="1847" y="515" width="6" height="9" fill="#e0408a"/>
<rect x="1847" y="564" width="6" height="8" fill="#ffffff"/>
<rect x="1847" y="658" width="6" height="9" fill="#e0408a"/>
<rect x="1847" y="669" width="6" height="9" fill="#7a62c0"/>
<rect x="1847" y="706" width="6" height="9" fill="#e0408a"/>
<rect x="1847" y="739" width="6" height="9" fill="#7a62c0"/>
<rect x="1853" y="796" width="6" height="8" fill="#3b8eea"/>
<rect x="1853" y="821" width="6" height="8" fill="#3b8eea"/>
<rect x="1847" y="872" width="6" height="25" fill="#c0507a"/>
<rect x="1841" y="117" width="1" height="936" fill="#2a2a2a"/><rect x="1744" y="117" width="1.5" height="936" fill="#191919"/>
</svg>
<!-- title bar items -->
<svg style="left:532px;top:13px" width="20" height="18" viewBox="0 0 20 18"><path d="M18 9H3M9 3L3 9l6 6" fill="none" stroke="#cccccc" stroke-width="1.6"/></svg>
<svg style="left:566px;top:13px" width="20" height="18" viewBox="0 0 20 18"><path d="M2 9h15M11 3l6 6-6 6" fill="none" stroke="#8a8a8a" stroke-width="1.6"/></svg>
<div class="a" style="left:602px;top:7px;width:732px;height:29px;background:#222222;border:1px solid #3c3c3c;border-radius:7px"></div>
<svg style="left:896px;top:12px" width="20" height="20" viewBox="0 0 20 20"><circle cx="12" cy="8" r="5.5" fill="none" stroke="#cccccc" stroke-width="1.5"/><path d="M8 12L2 18" stroke="#cccccc" stroke-width="1.6"/></svg>
<div class="t" style="left:920px;top:13px;font-size:16.5px;color:#e0e0e0">triplex-monorepo</div>
<svg style="left:1349px;top:10px" width="40" height="24" viewBox="0 0 40 24"><path d="M2 14 C2 9 4 7 6 7 L16 7 C18 7 20 9 20 14 L20 17 C20 20 16 22 11 22 C6 22 2 20 2 17 Z" fill="#d0d0d0"/><circle cx="7" cy="7.5" r="4.3" fill="#181818" stroke="#d0d0d0" stroke-width="2"/><circle cx="15" cy="7.5" r="4.3" fill="#181818" stroke="#d0d0d0" stroke-width="2"/><rect x="7.5" y="14" width="2.2" height="5" rx="1" fill="#181818"/><rect x="12.3" y="14" width="2.2" height="5" rx="1" fill="#181818"/><path d="M27 11l4 4 4-4" fill="none" stroke="#bbb" stroke-width="1.4"/></svg>
<svg style="left:1782px;top:12px" width="20" height="20" viewBox="0 0 20 20"><rect x="2" y="2" width="6" height="16" rx="1.5" fill="none" stroke="#ccc" stroke-width="1.4"/><rect x="11" y="2" width="6" height="6" rx="1.5" fill="none" stroke="#ccc" stroke-width="1.4"/><rect x="11" y="11" width="6" height="7" rx="1.5" fill="none" stroke="#ccc" stroke-width="1.4"/></svg>
<svg style="left:1815px;top:12px" width="20" height="20" viewBox="0 0 20 20"><rect x="2" y="2" width="16" height="16" rx="1.5" fill="none" stroke="#ccc" stroke-width="1.4"/><path d="M8 2v16" stroke="#ccc" stroke-width="1.6"/></svg>
<svg style="left:1848px;top:12px" width="20" height="20" viewBox="0 0 20 20"><rect x="2" y="2" width="16" height="16" rx="1.5" fill="none" stroke="#ccc" stroke-width="1.4"/><path d="M2 13h16" stroke="#ccc" stroke-width="1.6"/></svg>
<svg style="left:1881px;top:12px" width="20" height="20" viewBox="0 0 20 20"><rect x="2" y="2" width="16" height="16" rx="1.5" fill="none" stroke="#ccc" stroke-width="1.4"/><path d="M12 2v16" stroke="#ccc" stroke-width="1.6"/></svg>

<!-- tab icons -->
<svg style="left:15px;top:57px" width="20" height="20" viewBox="-10 -10 20 20"><g fill="none" stroke="#519aba" stroke-width="1.3"><ellipse rx="8.5" ry="3.3"/><ellipse rx="8.5" ry="3.3" transform="rotate(60)"/><ellipse rx="8.5" ry="3.3" transform="rotate(120)"/></g><circle r="1.6" fill="#519aba"/></svg>
<svg style="left:150px;top:60px" width="14" height="14" viewBox="0 0 14 14"><path d="M2 2l10 10M12 2L2 12" stroke="#e0e0e0" stroke-width="1.5"/></svg>
<svg style="left:856px;top:57px" width="20" height="20" viewBox="0 0 20 20"><rect x="2" y="2" width="16" height="16" rx="1.5" fill="none" stroke="#ccc" stroke-width="1.5"/><path d="M10 2v16" stroke="#ccc" stroke-width="1.5"/></svg>
<svg style="left:889px;top:64px" width="20" height="6" viewBox="0 0 20 6"><circle cx="3" cy="3" r="1.5" fill="#ccc"/><circle cx="10" cy="3" r="1.5" fill="#ccc"/><circle cx="17" cy="3" r="1.5" fill="#ccc"/></svg>
<svg style="left:943px;top:57px" width="20" height="20" viewBox="-10 -10 20 20"><g fill="none" stroke="#519aba" stroke-width="1.3"><ellipse rx="8.5" ry="3.3"/><ellipse rx="8.5" ry="3.3" transform="rotate(60)"/><ellipse rx="8.5" ry="3.3" transform="rotate(120)"/></g><circle r="1.6" fill="#519aba"/></svg>
<svg style="left:1054px;top:60px" width="14" height="14" viewBox="0 0 14 14"><path d="M2 2l10 10M12 2L2 12" stroke="#a0a0a0" stroke-width="1.4"/></svg>
<svg style="left:1820px;top:64px" width="20" height="6" viewBox="0 0 20 6"><circle cx="3" cy="3" r="1.5" fill="#ccc"/><circle cx="10" cy="3" r="1.5" fill="#ccc"/><circle cx="17" cy="3" r="1.5" fill="#ccc"/></svg>

<!-- breadcrumbs left -->
<div class="t bc" style="left:20.5px">Users</div>
<div class="t bc" style="left:85px">douges</div>
<div class="t bc" style="left:163px">projects</div>
<div class="t bc" style="left:246px">triplex-monorepo</div>
<div class="t bc" style="left:399px">examples</div>
<div class="t bc" style="left:492px">gitplex</div>
<div class="t bc" style="left:560px">c</div>
<div class="t bc" style="left:589px">scenes</div>
<div class="a" style="left:691px;top:88px;width:130px;height:29px;overflow:hidden"><div class="t bc" style="left:1px;top:7px">camera-testing.ts</div></div>
<svg style="left:0;top:0" width="1" height="1">
<g fill="none" stroke="#a0a0a0" stroke-width="1.3">
<path d="M72.6 97.5l6 6-6 6M149.9 97.5l6 6-6 6M232.6 97.5l6 6-6 6M386.4 97.5l6 6-6 6M479.0 97.5l6 6-6 6M576.0 97.5l6 6-6 6M651.0 97.5l6 6-6 6"/>
<path d="M1029.6 97.5l6 6-6 6M1081.3 97.5l6 6-6 6M1126.0 97.5l6 6-6 6M1247.0 97.5l6 6-6 6"/>
<path d="M551 98l5 5.5-4 5" stroke="#888"/>
</g>
<g transform="translate(676 103)"><g fill="none" stroke="#519aba" stroke-width="1.2"><ellipse rx="8" ry="3.1"/><ellipse rx="8" ry="3.1" transform="rotate(60)"/><ellipse rx="8" ry="3.1" transform="rotate(120)"/></g><circle r="1.5" fill="#519aba"/></g>
<g transform="translate(1151 103)"><g fill="none" stroke="#519aba" stroke-width="1.2"><ellipse rx="8" ry="3.1"/><ellipse rx="8" ry="3.1" transform="rotate(60)"/><ellipse rx="8" ry="3.1" transform="rotate(120)"/></g><circle r="1.5" fill="#519aba"/></g>
<g transform="translate(1270 103)" fill="none" stroke="#b180d7" stroke-width="1.4"><path d="M0-8l7 4v8l-7 4-7-4v-8z M-7-4l7 4 7-4 M0 0v8"/></g>
</svg>

<!-- breadcrumbs right -->
<div class="t bc" style="left:949px">examples</div>
<div class="t bc" style="left:1042px">uikit</div>
<div class="t bc" style="left:1095px">src</div>
<div class="t bc" style="left:1166px">scene.tsx</div>
<div class="t bc" style="left:1284px">UIKitExample</div>

<!-- ACTIVITY BAR -->
<div id="act" class="a"></div>
<svg style="left:0;top:0" width="1920" height="1081" viewBox="0 0 1920 1081">
<g fill="none" stroke="#c8c8c8" stroke-width="1.6" stroke-linejoin="round" stroke-linecap="round">
 <!-- files -->
 <path d="M1883 60 H1899 L1906 67 V83 A2 2 0 0 1 1904 85 H1896 M1883 60 A2 2 0 0 0 1881 62 V66"/>
 <path d="M1899 60 V67 H1906"/>
 <path d="M1875 68 A2 2 0 0 1 1877 66 H1894 A2 2 0 0 1 1896 68 V89 A2 2 0 0 1 1894 91 H1877 A2 2 0 0 1 1875 89 Z"/>
 <!-- run debug -->
 <path d="M1889 120 L1907 133 L1893 143"/>
 <path d="M1889 120 V132"/>
 <ellipse cx="1883" cy="143" rx="5" ry="6"/>
 <path d="M1878 141 H1873 M1878 147 L1874 150 M1888 141 H1892 M1888 147 L1891 150 M1880 137 L1877 134 M1886 137 L1889 134 M1878 143 H1888"/>
 <!-- search -->
 <circle cx="1894" cy="191" r="9.5"/>
 <path d="M1887 198 L1876 209"/>
 <!-- extensions -->
 <path d="M1877 252 H1887 V262 H1897 V271 H1877 Z M1877 262 H1887 V271"/>
 <rect x="1892" y="244" width="11" height="11" rx="1.5"/>
 <!-- remote explorer -->
 <rect x="1877" y="305" width="11" height="11" rx="1.5"/>
 <rect x="1891" y="318" width="11" height="11" rx="1.5"/>
 <path d="M1882 316 V323 H1891"/>
 <!-- account -->
 <circle cx="1889.6" cy="961.4" r="15"/>
 <circle cx="1889.6" cy="956" r="5.5"/>
 <path d="M1879 972 Q1882 964 1889.6 964 Q1897 964 1900 972"/>
 <!-- settings gear -->
 <g transform="translate(1889 1022)"><path d="M-2.5 -14 h5 l1 4 l3.5 1.5 l3.5 -2 l3.5 3.5 l-2 3.5 l1.5 3.5 l4 1 v5 l-4 1 l-1.5 3.5 l2 3.5 l-3.5 3.5 l-3.5 -2 l-3.5 1.5 l-1 4 h-5 l-1 -4 l-3.5 -1.5 l-3.5 2 l-3.5 -3.5 l2 -3.5 l-1.5 -3.5 l-4 -1 v-5 l4 -1 l1.5 -3.5 l-2 -3.5 l3.5 -3.5 l3.5 2 l3.5 -1.5 z"/><circle r="4"/></g>
 <!-- bell -->
 <path d="M1885 1071 V1064 A6.5 6.5 0 0 1 1898 1064 V1071 L1900 1073 H1883 Z M1889.5 1074.5 Q1891.5 1077 1893.5 1074.5"/>
</g>
<circle cx="1899.6" cy="267.9" r="10" fill="#0078d4"/>
<text x="1899.6" y="273" font-family="Liberation Sans" font-size="13" font-weight="bold" fill="#fff" text-anchor="middle">2</text>
<circle cx="1899.8" cy="1032.4" r="10" fill="#0078d4"/>
<text x="1899.8" y="1037.4" font-family="Liberation Sans" font-size="13" font-weight="bold" fill="#fff" text-anchor="middle">1</text>
</svg>


<svg style="left:0;top:0" width="1920" height="1081" viewBox="0 0 1920 1081">
<rect x="10" y="0" width="1900" height="1" fill="#505050"/>
<path d="M0 0 H11 A11 11 0 0 0 0 11 Z" fill="#2e4a66"/><path d="M11 0.5 A10.5 10.5 0 0 0 0.5 11" fill="none" stroke="#5a5a5a" stroke-width="1"/>
<path d="M1920 0 H1909 A11 11 0 0 1 1920 11 Z" fill="#2e4a66"/><path d="M1909 0.5 A10.5 10.5 0 0 1 1919.5 11" fill="none" stroke="#5a5a5a" stroke-width="1"/>
<path d="M0 1081 H11 A11 11 0 0 1 0 1070 Z" fill="#2e4a66"/>
<path d="M1920 1081 H1909 A11 11 0 0 0 1920 1070 Z" fill="#2e4a66"/>
</svg>
</body></html>
